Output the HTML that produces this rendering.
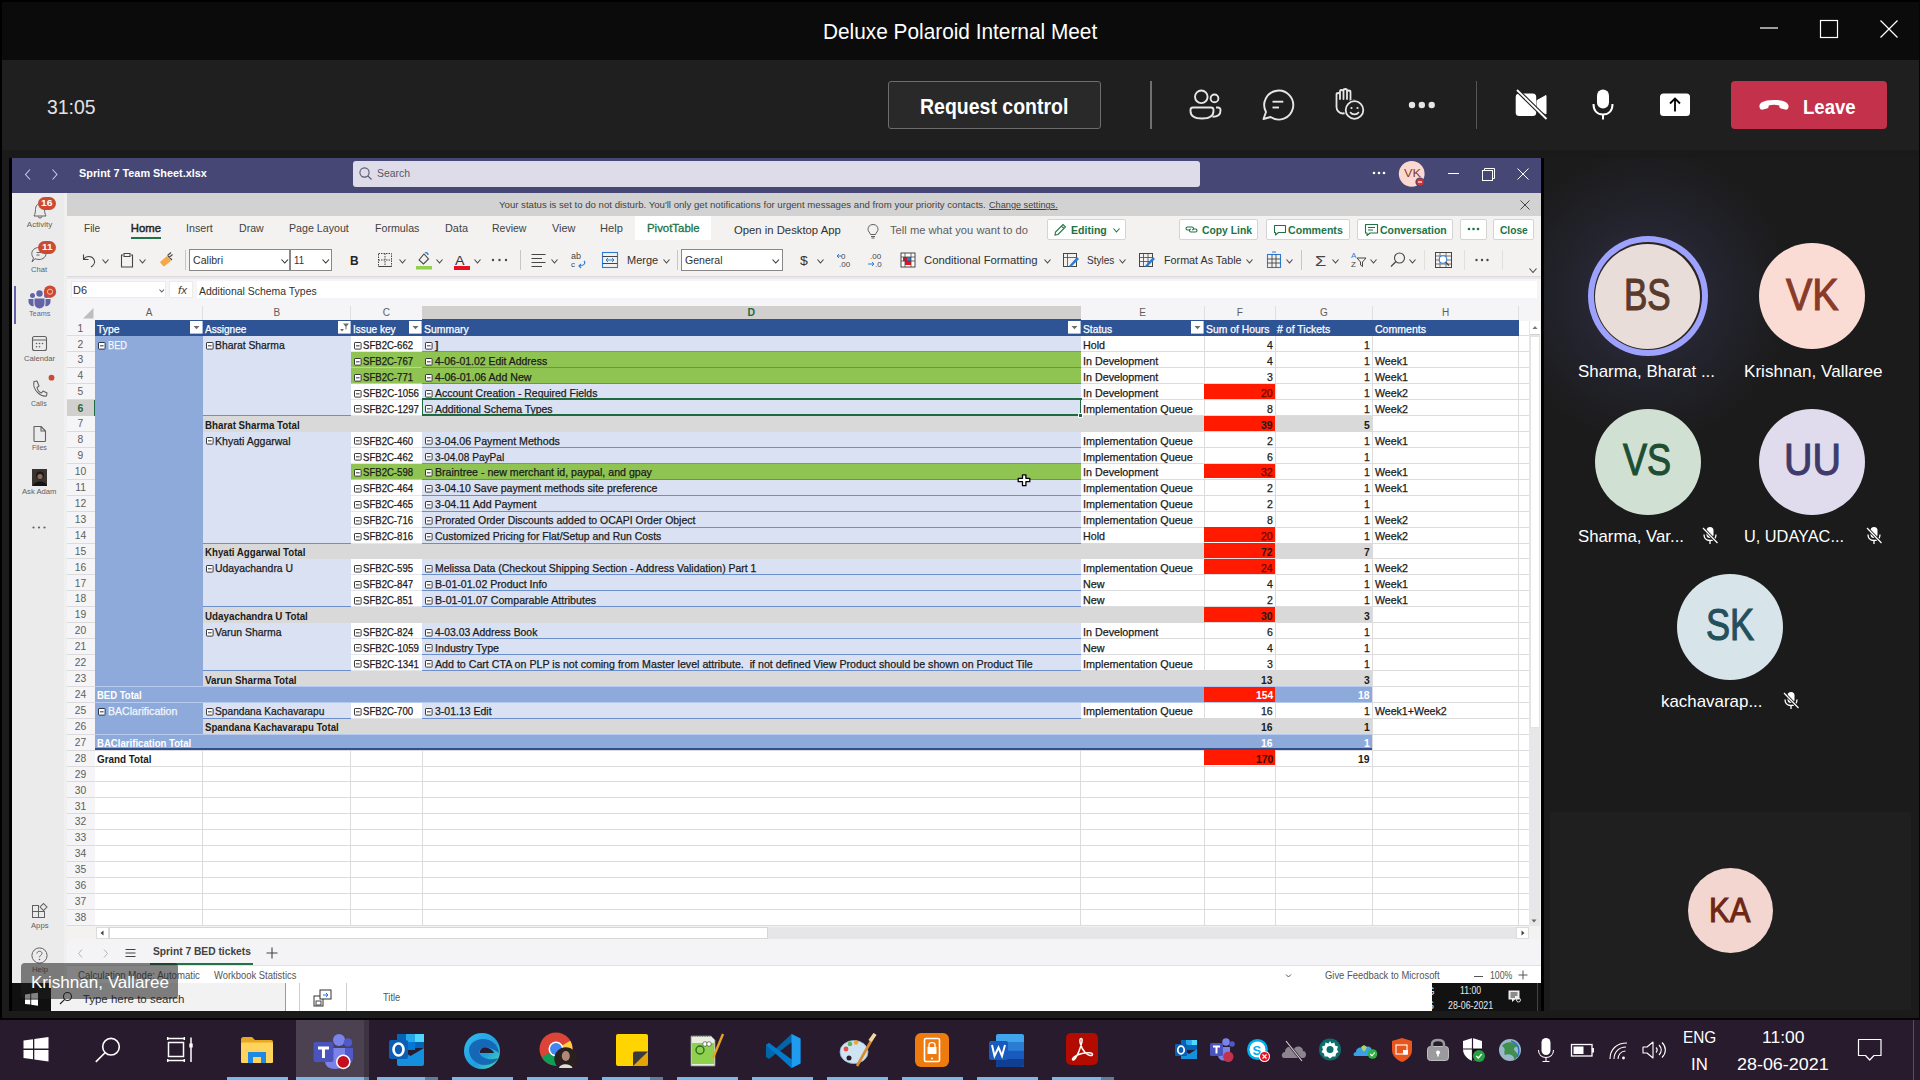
<!DOCTYPE html>
<html><head><meta charset="utf-8">
<style>
*{margin:0;padding:0;box-sizing:border-box}
html,body{width:1920px;height:1080px;overflow:hidden;background:#1b1b1b;font-family:"Liberation Sans",sans-serif}
.a{position:absolute}
.t{position:absolute;white-space:pre}
svg{overflow:visible}
.g{-webkit-text-stroke:0.25px currentColor}
</style></head><body>
<div class="a" style="left:0px;top:0px;width:1920px;height:60px;background:#0b0b0b"></div>
<div class="a" style="left:0px;top:0px;width:1920px;height:2px;background:#000"></div>
<div class="t " style="left:823.3px;top:20.9px;font-size:22px;line-height:22px;color:#ffffff;transform:scaleX(0.9461);transform-origin:0 0">Deluxe Polaroid Internal Meet</div>
<svg class="a" style="left:1740px;top:0px;" width="180" height="60" viewBox="0 0 180 60"><line x1="20" y1="28" x2="38" y2="28" stroke="#fff" stroke-width="1.2"/><rect x="80.5" y="20.5" width="17" height="17" fill="none" stroke="#fff" stroke-width="1.2"/><path d="M140.5 20.5 L157.5 37.5 M157.5 20.5 L140.5 37.5" stroke="#fff" stroke-width="1.2"/></svg>
<div class="a" style="left:0px;top:60px;width:1920px;height:90px;background:#1f1f1f"></div>
<div class="t " style="left:46.9px;top:96.0px;font-size:21px;line-height:21px;color:#e3e3e3;transform:scaleX(0.9229);transform-origin:0 0">31:05</div>
<div class="a" style="left:888px;top:81px;width:213px;height:48px;background:#292929;border:1.5px solid #6d6d6d;border-radius:3px"></div>
<div class="t " style="left:920.3px;top:95.6px;font-size:22px;line-height:22px;color:#ffffff;font-weight:bold;transform:scaleX(0.8862);transform-origin:0 0">Request control</div>
<div class="a" style="left:1150px;top:81px;width:1.6px;height:48px;background:#707070"></div>
<div class="a" style="left:1476px;top:81px;width:1.2px;height:48px;background:#555555"></div>
<svg class="a" style="left:1180px;top:80px;" width="60" height="50" viewBox="0 0 60 50"><g fill="none" stroke="#e6e6e6" stroke-width="1.9"><circle cx="21.3" cy="16.8" r="6.3"/><circle cx="34.5" cy="18.4" r="3.9"/><path d="M13 27.5 H31 a2.5 2.5 0 0 1 2.5 2.5 v1 c0 5 -4 7.5 -11.5 7.5 c-7.5 0 -11.5 -2.5 -11.5 -7.5 v-1 a2.5 2.5 0 0 1 2.5 -2.5z"/><path d="M36 27.5 h2 a2.5 2.5 0 0 1 2.5 2.5 v0.5 c0 4 -3 6.3 -8 6.3"/></g></svg>
<svg class="a" style="left:1250px;top:80px;" width="60" height="50" viewBox="0 0 60 50"><g fill="none" stroke="#e6e6e6" stroke-width="1.9"><path d="M13.5 39 L16 32 A14.5 14.5 0 1 1 20.5 37 Z" stroke-linejoin="round"/><line x1="22.5" y1="21.7" x2="33.3" y2="21.7"/><line x1="22.5" y1="27.5" x2="29" y2="27.5"/></g></svg>
<svg class="a" style="left:1320px;top:80px;" width="60" height="50" viewBox="0 0 60 50"><g fill="none" stroke="#e6e6e6" stroke-width="1.8" stroke-linecap="round" stroke-linejoin="round"><path d="M16.5 25 V14.5 C16.5 12.5 20 12.5 20 14.5 V19 V11.5 C20 9.5 23.5 9.5 23.5 11.5 V19 V10.5 C23.5 8.5 27 8.5 27 10.5 V19 V12 C27 10 30.5 10 30.5 12 V23 L32.5 21 C34.5 19.5 36.5 21.5 35 23.5 L29 31 C27 33 25 33.5 22.5 33.5 C19 33.5 16.5 30 16.5 27Z"/></g><circle cx="34.5" cy="30" r="10.5" fill="#1f1f1f"/><circle cx="34.5" cy="30" r="8.8" fill="none" stroke="#e6e6e6" stroke-width="1.8"/><path d="M30.5 32.5 C32 35 37 35 38.5 32.5" fill="none" stroke="#e6e6e6" stroke-width="1.6" stroke-linecap="round"/><circle cx="31.5" cy="28" r="1.1" fill="#e6e6e6"/><circle cx="37.5" cy="28" r="1.1" fill="#e6e6e6"/></svg>
<svg class="a" style="left:1400px;top:80px;" width="50" height="50" viewBox="0 0 50 50"><g fill="#e6e6e6"><circle cx="12" cy="25" r="3.2"/><circle cx="21.8" cy="25" r="3.2"/><circle cx="31.7" cy="25" r="3.2"/></g></svg>
<svg class="a" style="left:1505px;top:80px;" width="50" height="50" viewBox="0 0 50 50"><rect x="10.7" y="13.6" width="20.5" height="22.3" rx="3.5" fill="#fff"/><path d="M32 20.5 L41 15.5 V34 L32 29 Z" fill="#fff" stroke="#fff" stroke-width="1" stroke-linejoin="round"/><line x1="12" y1="10" x2="41.5" y2="39" stroke="#1f1f1f" stroke-width="4"/><line x1="12" y1="10" x2="41.5" y2="39" stroke="#fff" stroke-width="1.8"/></svg>
<svg class="a" style="left:1580px;top:80px;" width="50" height="50" viewBox="0 0 50 50"><rect x="17" y="9.5" width="12" height="19" rx="6" fill="#fff"/><path d="M13.5 24 C13.5 31 17.5 34.5 23 34.5 C28.5 34.5 32.5 31 32.5 24" fill="none" stroke="#fff" stroke-width="2"/><line x1="23" y1="34.5" x2="23" y2="39.5" stroke="#fff" stroke-width="2"/></svg>
<svg class="a" style="left:1650px;top:80px;" width="50" height="50" viewBox="0 0 50 50"><rect x="10" y="13.6" width="30" height="22.4" rx="3.5" fill="#fff"/><path d="M25 31.5 V19 M20 23.5 L25 18.5 L30 23.5" fill="none" stroke="#000" stroke-width="1.8"/></svg>
<div class="a" style="left:1731px;top:81px;width:156px;height:48px;background:#c4314b;border-radius:4px"></div>
<svg class="a" style="left:1755px;top:90px;" width="40" height="30" viewBox="0 0 40 30"><path d="M4.5 17 C4 13.5 7 10 19 10 C31 10 34 13.5 33.5 17 C33.3 19 32 20 30 19.5 L26 18.5 C24.5 18 24.3 17 24.3 15.5 C21 14.5 17 14.5 13.7 15.5 C13.7 17 13.5 18 12 18.5 L8 19.5 C6 20 4.7 19 4.5 17Z" fill="#fff"/></svg>
<div class="t " style="left:1803.0px;top:95.8px;font-size:21px;line-height:21px;color:#ffffff;font-weight:bold;transform:scaleX(0.8834);transform-origin:0 0">Leave</div>
<div class="a" style="left:0px;top:150px;width:1920px;height:8px;background:#1a1a1a"></div>
<div class="a" style="left:9px;top:158px;width:3px;height:853px;background:#000"></div>
<div class="a" style="left:12px;top:158px;width:1529px;height:853px;background:#f3f2f1"></div>
<div class="a" style="left:1541px;top:158px;width:3px;height:853px;background:#000"></div>
<div class="a" style="left:12px;top:158px;width:1529px;height:35px;background:#464775"></div>
<svg class="a" style="left:20px;top:165px;" width="40" height="20" viewBox="0 0 40 20"><path d="M10 4.5 L5.5 9.5 L10 14.5 M32.5 4.5 L37 9.5 L32.5 14.5" fill="none" stroke="#c8c9e4" stroke-width="1.1"/></svg>
<div class="t " style="left:79.0px;top:168.2px;font-size:11.5px;line-height:11.5px;color:#ffffff;font-weight:bold;transform:scaleX(0.9447);transform-origin:0 0">Sprint 7 Team Sheet.xlsx</div>
<div class="a" style="left:353px;top:161.1px;width:847px;height:25.7px;background:#dddce8;border-radius:3px"></div>
<svg class="a" style="left:358px;top:166px;" width="16" height="16" viewBox="0 0 16 16"><circle cx="6.5" cy="6.5" r="4.6" fill="none" stroke="#55576b" stroke-width="1.1"/><line x1="9.8" y1="9.8" x2="13.5" y2="13.5" stroke="#55576b" stroke-width="1.1"/></svg>
<div class="t " style="left:377.0px;top:168.2px;font-size:11px;line-height:11px;color:#55576b;transform:scaleX(0.9468);transform-origin:0 0">Search</div>
<svg class="a" style="left:1370px;top:165px;" width="20" height="16" viewBox="0 0 20 16"><g fill="#fff"><circle cx="4" cy="8" r="1.3"/><circle cx="9" cy="8" r="1.3"/><circle cx="14" cy="8" r="1.3"/></g></svg>
<svg class="a" style="left:1396px;top:158px;" width="34" height="34" viewBox="0 0 34 34"><circle cx="15.7" cy="15.8" r="12.9" fill="#fbd9d0"/><circle cx="24" cy="24" r="4.6" fill="#464775"/><circle cx="24" cy="24" r="3.5" fill="#d13438"/><rect x="22" y="23.4" width="4" height="1.2" fill="#fff"/></svg>
<div class="t " style="left:1403.5px;top:169.0px;font-size:10px;line-height:10px;color:#8a3c2a;transform:scaleX(1.2744);transform-origin:0 0">VK</div>
<svg class="a" style="left:1440px;top:160px;" width="100" height="30" viewBox="0 0 100 30"><line x1="8" y1="13.5" x2="19" y2="13.5" stroke="#fff" stroke-width="1"/><rect x="42.5" y="10.5" width="10" height="10" fill="none" stroke="#fff" stroke-width="1"/><path d="M44.5 10.5 V8.5 H54.5 V18.5 H52.5" fill="none" stroke="#fff" stroke-width="1"/><path d="M77.5 8.5 L88.5 19.5 M88.5 8.5 L77.5 19.5" stroke="#fff" stroke-width="1"/></svg>
<div class="a" style="left:12px;top:193px;width:54.5px;height:818px;background:#ebebeb"></div>
<div class="a" style="left:64px;top:193px;width:2.5px;height:818px;background:#f0f0f0"></div>
<svg class="a" style="left:30px;top:201px;" width="20" height="20" viewBox="0 0 20 20"><path d="M4 15 C5 13 5.5 11 5.5 8.5 C5.5 5 7.5 2.5 10 2.5 C12.5 2.5 14.5 5 14.5 8.5 C14.5 11 15 13 16 15 Z M8 15.5 C8 17.5 12 17.5 12 15.5" fill="none" stroke="#616161" stroke-width="1"/></svg>
<div class="a" style="left:38.3px;top:196.5px;width:17.4px;height:13px;background:#cc4a31;border-radius:6.5px"></div>
<div class="t " style="left:41.3px;top:199.0px;font-size:9px;line-height:9px;color:#fff;font-weight:bold;transform:scaleX(1.1488);transform-origin:0 0">16</div>
<div class="t " style="left:26.8px;top:221.2px;font-size:8px;line-height:8px;color:#616161">Activity</div>
<svg class="a" style="left:29px;top:245px;" width="20" height="20" viewBox="0 0 20 20"><path d="M3 17 L4.5 13 C3.3 11.5 2.8 10 2.8 8.5 C2.8 5 6 2.5 10 2.5 C14 2.5 17 5 17 8.5 C17 12 14 14.5 10 14.5 C8.5 14.5 7 14.2 6 13.7 Z" fill="none" stroke="#616161" stroke-width="1"/><line x1="7.5" y1="7.5" x2="12" y2="7.5" stroke="#616161"/><line x1="7.5" y1="10" x2="10.5" y2="10" stroke="#616161"/></svg>
<div class="a" style="left:38.3px;top:240.5px;width:17.4px;height:13px;background:#cc4a31;border-radius:6.5px"></div>
<div class="t " style="left:41.8px;top:243.0px;font-size:9px;line-height:9px;color:#fff;font-weight:bold;transform:scaleX(1.1036);transform-origin:0 0">11</div>
<div class="t " style="left:31.3px;top:265.9px;font-size:8px;line-height:8px;color:#616161;transform:scaleX(0.9468);transform-origin:0 0">Chat</div>
<div class="a" style="left:14px;top:285.5px;width:1.8px;height:38.3px;background:#6264a7"></div>
<svg class="a" style="left:27px;top:289px;" width="26" height="20" viewBox="0 0 26 20"><g fill="#6264a7"><circle cx="12.5" cy="4.5" r="3.2"/><circle cx="5.5" cy="6.5" r="2.5"/><circle cx="19.5" cy="6.5" r="2.5"/><path d="M7.5 9.5 H17.5 V14.5 A5 5 0 0 1 7.5 14.5Z"/><path d="M1.5 10 H6.5 V15 C6.5 16 6.7 16.5 7 17 A4.5 4.5 0 0 1 1.5 13Z"/><path d="M23.5 10 H18.5 V15 C18.5 16 18.3 16.5 18 17 A4.5 4.5 0 0 0 23.5 13Z"/></g></svg>
<svg class="a" style="left:43px;top:285px;" width="14" height="14" viewBox="0 0 14 14"><circle cx="7" cy="6.7" r="6.2" fill="#cc4a31"/><circle cx="7" cy="6.7" r="2.6" fill="none" stroke="#f7c6b5" stroke-width="1"/></svg>
<div class="t " style="left:28.8px;top:310.2px;font-size:8px;line-height:8px;color:#6264a7;transform:scaleX(0.9040);transform-origin:0 0">Teams</div>
<svg class="a" style="left:30px;top:334px;" width="20" height="20" viewBox="0 0 20 20"><rect x="2.5" y="2.5" width="14" height="14" rx="2" fill="none" stroke="#616161" stroke-width="1.1"/><line x1="2.5" y1="6" x2="16.5" y2="6" stroke="#616161"/><g fill="#616161"><circle cx="6.5" cy="9.5" r=".8"/><circle cx="9.5" cy="9.5" r=".8"/><circle cx="12.5" cy="9.5" r=".8"/><circle cx="6.5" cy="12.8" r=".8"/><circle cx="9.5" cy="12.8" r=".8"/></g></svg>
<div class="t " style="left:24.0px;top:354.9px;font-size:8px;line-height:8px;color:#616161;transform:scaleX(0.9549);transform-origin:0 0">Calendar</div>
<svg class="a" style="left:29px;top:379px;" width="20" height="20" viewBox="0 0 20 20"><path d="M5 2.5 L8 2 L10 7 L8 8.5 C8.5 11 10 13 12.5 14 L14 12 L18 14 L17.5 17 C12 18 3 11 5 2.5Z" fill="none" stroke="#616161" stroke-width="1.1" stroke-linejoin="round"/></svg>
<svg class="a" style="left:48px;top:374px;" width="8" height="8" viewBox="0 0 8 8"><circle cx="3.5" cy="3.7" r="2.9" fill="#cc4a31"/></svg>
<div class="t " style="left:31.4px;top:399.7px;font-size:8px;line-height:8px;color:#616161;transform:scaleX(0.8829);transform-origin:0 0">Calls</div>
<svg class="a" style="left:30px;top:424px;" width="20" height="20" viewBox="0 0 20 20"><path d="M4 2.5 H11 L15.5 7 V16.5 C15.5 17 15 17.5 14.5 17.5 H5 C4.5 17.5 4 17 4 16.5Z M11 2.5 V7 H15.5" fill="none" stroke="#616161" stroke-width="1.1" stroke-linejoin="round"/></svg>
<div class="t " style="left:32.0px;top:444.2px;font-size:8px;line-height:8px;color:#616161;transform:scaleX(0.8762);transform-origin:0 0">Files</div>
<div class="a" style="left:31.5px;top:469px;width:15.5px;height:16.5px;background:#3a3430"></div>
<svg class="a" style="left:31.5px;top:469px;" width="16" height="17" viewBox="0 0 16 17"><circle cx="8" cy="6.5" r="4" fill="#1c1a1a"/><path d="M1 17 C2 11 14 11 15 17Z" fill="#141414"/><circle cx="8" cy="7.5" r="2.6" fill="#8a6a58"/></svg>
<div class="t " style="left:22.2px;top:487.9px;font-size:8px;line-height:8px;color:#616161;transform:scaleX(0.9579);transform-origin:0 0">Ask Adam</div>
<svg class="a" style="left:30px;top:524px;" width="20" height="8" viewBox="0 0 20 8"><g fill="#616161"><circle cx="3.5" cy="3.5" r="1.1"/><circle cx="9" cy="3.5" r="1.1"/><circle cx="14.5" cy="3.5" r="1.1"/></g></svg>
<svg class="a" style="left:30px;top:903px;" width="20" height="20" viewBox="0 0 20 20"><g fill="none" stroke="#616161" stroke-width="1"><rect x="2.5" y="8.5" width="6" height="6"/><rect x="8.5" y="8.5" width="6" height="6"/><rect x="2.5" y="2.5" width="6" height="6"/><rect x="11" y="1.5" width="5" height="5" transform="rotate(45 13.5 4)"/></g></svg>
<div class="t " style="left:30.8px;top:922.2px;font-size:8px;line-height:8px;color:#616161;transform:scaleX(0.9597);transform-origin:0 0">Apps</div>
<svg class="a" style="left:29px;top:945px;" width="22" height="22" viewBox="0 0 22 22"><circle cx="10.5" cy="10.5" r="7.6" fill="none" stroke="#616161" stroke-width="1"/><path d="M8 8.5 C8 5.5 13 5.5 13 8.5 C13 10 10.5 10.5 10.5 12.3" fill="none" stroke="#616161"/><circle cx="10.5" cy="14.5" r=".8" fill="#616161"/></svg>
<div class="t " style="left:31.5px;top:966.2px;font-size:8px;line-height:8px;color:#616161;transform:scaleX(0.9725);transform-origin:0 0">Help</div>
<div class="a" style="left:66.5px;top:193px;width:1474.5px;height:22.5px;background:#d2d2d2"></div>
<div class="t " style="left:499.4px;top:200.1px;font-size:9.9px;line-height:9.9px;color:#424242;transform:scaleX(0.9737);transform-origin:0 0">Your status is set to do not disturb. You&#x27;ll only get notifications for urgent messages and from your priority contacts.</div>
<div class="t " style="left:989.2px;top:200.1px;font-size:9.9px;line-height:9.9px;color:#424242;transform:scaleX(0.9273);transform-origin:0 0;text-decoration:underline">Change settings.</div>
<svg class="a" style="left:1517px;top:197px;" width="16" height="16" viewBox="0 0 16 16"><path d="M3.5 3.5 L12.5 12.5 M12.5 3.5 L3.5 12.5" stroke="#444" stroke-width="1"/></svg>
<div class="a" style="left:66.5px;top:215.5px;width:1474.5px;height:61px;background:#f3f2f1"></div>
<div class="t " style="left:84.2px;top:222.5px;font-size:11.3px;line-height:11.3px;color:#424242;transform:scaleX(0.8897);transform-origin:0 0">File</div>
<div class="t " style="left:186.3px;top:222.5px;font-size:11.3px;line-height:11.3px;color:#424242;transform:scaleX(0.9483);transform-origin:0 0">Insert</div>
<div class="t " style="left:239.2px;top:222.5px;font-size:11.3px;line-height:11.3px;color:#424242;transform:scaleX(0.9367);transform-origin:0 0">Draw</div>
<div class="t " style="left:289.2px;top:222.5px;font-size:11.3px;line-height:11.3px;color:#424242;transform:scaleX(0.9424);transform-origin:0 0">Page Layout</div>
<div class="t " style="left:375.0px;top:222.5px;font-size:11.3px;line-height:11.3px;color:#424242;transform:scaleX(0.9428);transform-origin:0 0">Formulas</div>
<div class="t " style="left:444.6px;top:222.5px;font-size:11.3px;line-height:11.3px;color:#424242;transform:scaleX(0.9636);transform-origin:0 0">Data</div>
<div class="t " style="left:492.3px;top:222.5px;font-size:11.3px;line-height:11.3px;color:#424242;transform:scaleX(0.9285);transform-origin:0 0">Review</div>
<div class="t " style="left:551.7px;top:222.5px;font-size:11.3px;line-height:11.3px;color:#424242;transform:scaleX(0.9675);transform-origin:0 0">View</div>
<div class="t " style="left:599.9px;top:222.5px;font-size:11.3px;line-height:11.3px;color:#424242;transform:scaleX(0.9854);transform-origin:0 0">Help</div>
<div class="t " style="left:130.8px;top:222.5px;font-size:11.3px;line-height:11.3px;color:#252423;-webkit-text-stroke:0.45px #252423">Home</div>
<div class="a" style="left:131px;top:237.3px;width:30px;height:2.2px;background:#217346"></div>
<div class="a" style="left:635px;top:215.7px;width:76px;height:24.3px;background:#ffffff"></div>
<div class="t " style="left:646.8px;top:222.5px;font-size:11.3px;line-height:11.3px;color:#217346;transform:scaleX(1.0089);transform-origin:0 0;-webkit-text-stroke:0.3px #217346">PivotTable</div>
<div class="t " style="left:734.0px;top:225.4px;font-size:11.3px;line-height:11.3px;color:#323130">Open in Desktop App</div>
<svg class="a" style="left:866px;top:222px;" width="14" height="18" viewBox="0 0 14 18"><path d="M7 2.5 C3.5 2.5 2 5 2 7.3 C2 9.5 4 10.5 4.5 12.5 H9.5 C10 10.5 12 9.5 12 7.3 C12 5 10.5 2.5 7 2.5Z M5 14.5 H9 M5.5 16 H8.5" fill="none" stroke="#616161" stroke-width="1"/></svg>
<div class="t " style="left:890.3px;top:225.4px;font-size:11.3px;line-height:11.3px;color:#605e5c;transform:scaleX(0.9897);transform-origin:0 0">Tell me what you want to do</div>
<div class="a" style="left:1047px;top:219px;width:78.5px;height:21px;background:#ffffff;border:1px solid #d6d4d2;border-radius:2px"></div>
<div class="a" style="left:1178.7px;top:219px;width:79.3px;height:21px;background:#ffffff;border:1px solid #d6d4d2;border-radius:2px"></div>
<div class="a" style="left:1265.5px;top:219px;width:84.2px;height:21px;background:#ffffff;border:1px solid #d6d4d2;border-radius:2px"></div>
<div class="a" style="left:1357px;top:219px;width:95.6px;height:21px;background:#ffffff;border:1px solid #d6d4d2;border-radius:2px"></div>
<div class="a" style="left:1459.7px;top:219px;width:26.9px;height:21px;background:#ffffff;border:1px solid #d6d4d2;border-radius:2px"></div>
<div class="a" style="left:1493.4px;top:219px;width:40.6px;height:21px;background:#ffffff;border:1px solid #d6d4d2;border-radius:2px"></div>
<svg class="a" style="left:1052px;top:222px;" width="16" height="16" viewBox="0 0 16 16"><path d="M3 13 L3.5 10 L11 2.5 L13.5 5 L6 12.5 Z M9.5 4 L12 6.5" fill="none" stroke="#217346" stroke-width="1.1"/></svg>
<div class="t " style="left:1070.8px;top:224.8px;font-size:11.5px;line-height:11.5px;color:#217346;font-weight:bold;transform:scaleX(0.9188);transform-origin:0 0">Editing</div>
<svg class="a" style="left:1113px;top:228px;" width="7" height="5" viewBox="0 0 7 5"><path d="M0.5 0.5 L3.5 4 L6.5 0.5" fill="none" stroke="#217346" stroke-width="1.1"/></svg>
<svg class="a" style="left:1184px;top:223px;" width="16" height="14" viewBox="0 0 16 14"><path d="M6 7 H3.5 C1.5 7 1.5 4 3.5 4 H8 C10 4 10 7 8 7 M9 6 H11.5 C13.5 6 13.5 9 11.5 9 H7 C5 9 5 6 7 6" fill="none" stroke="#217346" stroke-width="1.1"/></svg>
<div class="t " style="left:1201.8px;top:224.8px;font-size:11.5px;line-height:11.5px;color:#217346;font-weight:bold;transform:scaleX(0.8995);transform-origin:0 0">Copy Link</div>
<svg class="a" style="left:1272px;top:222px;" width="16" height="16" viewBox="0 0 16 16"><path d="M2.5 3.5 H13.5 V10.5 H6.5 L3.5 13 V10.5 H2.5 Z" fill="none" stroke="#217346" stroke-width="1.1" stroke-linejoin="round"/></svg>
<div class="t " style="left:1288.3px;top:224.8px;font-size:11.5px;line-height:11.5px;color:#217346;font-weight:bold;transform:scaleX(0.9222);transform-origin:0 0">Comments</div>
<svg class="a" style="left:1363px;top:222px;" width="16" height="16" viewBox="0 0 16 16"><path d="M2.5 2.5 H14.5 V11 H7 L4 13.5 V11 H2.5 Z M5 5.5 H12 M5 8 H10" fill="none" stroke="#217346" stroke-width="1.1" stroke-linejoin="round"/></svg>
<div class="t " style="left:1379.8px;top:224.8px;font-size:11.5px;line-height:11.5px;color:#217346;font-weight:bold;transform:scaleX(0.9076);transform-origin:0 0">Conversation</div>
<svg class="a" style="left:1466px;top:226px;" width="16" height="6" viewBox="0 0 16 6"><g fill="#217346"><circle cx="3" cy="3" r="1.3"/><circle cx="7.5" cy="3" r="1.3"/><circle cx="12" cy="3" r="1.3"/></g></svg>
<div class="t " style="left:1500.0px;top:224.8px;font-size:11.5px;line-height:11.5px;color:#217346;font-weight:bold;transform:scaleX(0.8877);transform-origin:0 0">Close</div>
<svg class="a" style="left:80px;top:252px;" width="18" height="16" viewBox="0 0 18 16"><path d="M3.5 2.5 V7.5 H8.5 M3.8 7.2 C6 3.5 12 3.5 14 7.5 C15.5 10.5 13.5 13.5 11 15" fill="none" stroke="#484644" stroke-width="1.1"/></svg>
<svg class="a" style="left:101.7px;top:258.5px;" width="7" height="5" viewBox="0 0 7 5"><path d="M0.5 0.5 L3.5 4 L6.5 0.5" fill="none" stroke="#444" stroke-width="1.1"/></svg>
<svg class="a" style="left:119px;top:251px;" width="16" height="18" viewBox="0 0 16 18"><path d="M4 4 H2.5 V16 H13.5 V4 H12 M5 2.5 H11 V5.5 H5Z" fill="none" stroke="#484644" stroke-width="1.1"/></svg>
<svg class="a" style="left:139.4px;top:258.5px;" width="7" height="5" viewBox="0 0 7 5"><path d="M0.5 0.5 L3.5 4 L6.5 0.5" fill="none" stroke="#444" stroke-width="1.1"/></svg>
<svg class="a" style="left:158px;top:251px;" width="16" height="18" viewBox="0 0 16 18"><path d="M2 11 L9 5 L13 10 L6 15.5 C4 14 3 12.5 2 11Z" fill="#f2a94d"/><path d="M9.5 4.5 L13 1.5 M11 6.5 L14.5 3.5 M10 5 L14 9" stroke="#484644" stroke-width="1.1"/></svg>
<div class="a" style="left:185px;top:250px;width:1px;height:20px;background:#c8c6c4"></div>
<div class="a" style="left:189.4px;top:249px;width:101.1px;height:22px;background:#fff;border:1px solid #8a8886"></div>
<div class="t " style="left:193.3px;top:255.4px;font-size:11.3px;line-height:11.3px;color:#323130;transform:scaleX(0.9368);transform-origin:0 0">Calibri</div>
<svg class="a" style="left:280.5px;top:258.5px;" width="7.5" height="5" viewBox="0 0 7.5 5"><path d="M0.5 0.5 L3.75 4 L7.0 0.5" fill="none" stroke="#323130" stroke-width="1.1"/></svg>
<div class="a" style="left:290px;top:249px;width:41.6px;height:22px;background:#fff;border:1px solid #8a8886"></div>
<div class="t " style="left:294.4px;top:255.4px;font-size:11.3px;line-height:11.3px;color:#323130;transform:scaleX(0.8525);transform-origin:0 0">11</div>
<svg class="a" style="left:321.7px;top:258.5px;" width="7.5" height="5" viewBox="0 0 7.5 5"><path d="M0.5 0.5 L3.75 4 L7.0 0.5" fill="none" stroke="#323130" stroke-width="1.1"/></svg>
<div class="t " style="left:349.6px;top:254.1px;font-size:13.5px;line-height:13.5px;color:#252423;font-weight:bold;transform:scaleX(0.8821);transform-origin:0 0">B</div>
<svg class="a" style="left:377px;top:252px;" width="16" height="16" viewBox="0 0 16 16"><rect x="1.5" y="1.5" width="13" height="13" fill="none" stroke="#484644" stroke-width="1" stroke-dasharray="1.5 1"/><path d="M8 1.5 V14.5 M1.5 8 H14.5" stroke="#484644" stroke-width="1" stroke-dasharray="1.5 1"/><line x1="1.5" y1="14.5" x2="14.5" y2="14.5" stroke="#484644"/></svg>
<svg class="a" style="left:398.5px;top:258.5px;" width="7" height="5" viewBox="0 0 7 5"><path d="M0.5 0.5 L3.5 4 L6.5 0.5" fill="none" stroke="#444" stroke-width="1.1"/></svg>
<svg class="a" style="left:415px;top:250px;" width="18" height="20" viewBox="0 0 18 20"><path d="M4 10 L9 4 L13.5 9 L8.5 14 Z" fill="none" stroke="#484644" stroke-width="1.1"/><path d="M10 3 C11 2 13 3 13 5" fill="none" stroke="#2b7cd3" stroke-width="1.3"/><rect x="1" y="16" width="16" height="3.5" fill="#92d050"/></svg>
<svg class="a" style="left:436px;top:258.5px;" width="7" height="5" viewBox="0 0 7 5"><path d="M0.5 0.5 L3.5 4 L6.5 0.5" fill="none" stroke="#444" stroke-width="1.1"/></svg>
<div class="t " style="left:455.0px;top:253.6px;font-size:13.5px;line-height:13.5px;color:#323130;transform:scaleX(1.0550);transform-origin:0 0">A</div>
<div class="a" style="left:453.8px;top:266px;width:16.2px;height:3.5px;background:#e81123"></div>
<svg class="a" style="left:474px;top:258.5px;" width="7" height="5" viewBox="0 0 7 5"><path d="M0.5 0.5 L3.5 4 L6.5 0.5" fill="none" stroke="#444" stroke-width="1.1"/></svg>
<svg class="a" style="left:490px;top:257px;" width="20" height="6" viewBox="0 0 20 6"><g fill="#484644"><circle cx="3" cy="3" r="1.2"/><circle cx="9.5" cy="3" r="1.2"/><circle cx="16" cy="3" r="1.2"/></g></svg>
<div class="a" style="left:519.6px;top:250px;width:1px;height:20px;background:#c8c6c4"></div>
<svg class="a" style="left:530px;top:252px;" width="18" height="16" viewBox="0 0 18 16"><path d="M1.5 2.5 H15.5 M1.5 6.5 H12 M1.5 10.5 H15.5 M1.5 14.5 H12" stroke="#484644" stroke-width="1"/></svg>
<svg class="a" style="left:551px;top:258.5px;" width="7" height="5" viewBox="0 0 7 5"><path d="M0.5 0.5 L3.5 4 L6.5 0.5" fill="none" stroke="#444" stroke-width="1.1"/></svg>
<svg class="a" style="left:570px;top:250px;" width="18" height="20" viewBox="0 0 18 20"><text x="1" y="9" font-size="9" font-family="Liberation Sans" fill="#484644">ab</text><text x="1" y="17" font-size="8" font-family="Liberation Sans" fill="#484644">c</text><path d="M14 11 C16 13 14 16 9 16 M11 14 L9 16 L11 18" fill="none" stroke="#2b7cd3" stroke-width="1.1"/></svg>
<svg class="a" style="left:601px;top:251px;" width="18" height="18" viewBox="0 0 18 18"><rect x="1.5" y="1.5" width="15" height="15" fill="none" stroke="#2b7cd3" stroke-width="1.1"/><path d="M1.5 5.5 H16.5 M1.5 12.5 H16.5" stroke="#484644" stroke-width="1"/><path d="M5 9 H13 M7 7 L5 9 L7 11 M11 7 L13 9 L11 11" fill="none" stroke="#2b7cd3" stroke-width="1"/></svg>
<div class="t " style="left:626.5px;top:255.4px;font-size:11.3px;line-height:11.3px;color:#323130;transform:scaleX(0.9741);transform-origin:0 0">Merge</div>
<svg class="a" style="left:663px;top:258.5px;" width="7" height="5" viewBox="0 0 7 5"><path d="M0.5 0.5 L3.5 4 L6.5 0.5" fill="none" stroke="#444" stroke-width="1.1"/></svg>
<div class="a" style="left:677.2px;top:250px;width:1px;height:20px;background:#c8c6c4"></div>
<div class="a" style="left:681.4px;top:249px;width:101.3px;height:22px;background:#fff;border:1px solid #8a8886"></div>
<div class="t " style="left:685.3px;top:255.4px;font-size:11.3px;line-height:11.3px;color:#323130;transform:scaleX(0.9328);transform-origin:0 0">General</div>
<svg class="a" style="left:771.8px;top:258.5px;" width="7.5" height="5" viewBox="0 0 7.5 5"><path d="M0.5 0.5 L3.75 4 L7.0 0.5" fill="none" stroke="#323130" stroke-width="1.1"/></svg>
<div class="t " style="left:800.4px;top:254.0px;font-size:13px;line-height:13px;color:#323130;transform:scaleX(1.0788);transform-origin:0 0">$</div>
<svg class="a" style="left:816.6px;top:258.5px;" width="7" height="5" viewBox="0 0 7 5"><path d="M0.5 0.5 L3.5 4 L6.5 0.5" fill="none" stroke="#444" stroke-width="1.1"/></svg>
<svg class="a" style="left:836px;top:250px;" width="18" height="20" viewBox="0 0 18 20"><text x="5" y="9" font-size="8" font-family="Liberation Sans" fill="#484644">0</text><text x="3" y="17" font-size="8" font-family="Liberation Sans" fill="#484644">.00</text><path d="M1 6 H6 M3 4 L1 6 L3 8" fill="none" stroke="#2b7cd3" stroke-width="1"/></svg>
<svg class="a" style="left:867px;top:250px;" width="18" height="20" viewBox="0 0 18 20"><text x="3" y="9" font-size="8" font-family="Liberation Sans" fill="#484644">.00</text><text x="8" y="17" font-size="8" font-family="Liberation Sans" fill="#484644">.0</text><path d="M1 14 H7 M5 12 L7 14 L5 16" fill="none" stroke="#2b7cd3" stroke-width="1"/></svg>
<svg class="a" style="left:900px;top:252px;" width="16" height="16" viewBox="0 0 16 16"><rect x="1" y="1" width="14" height="14" fill="#fff" stroke="#484644" stroke-width="1"/><rect x="3" y="5" width="4" height="4" fill="#e81123"/><rect x="7" y="5" width="4" height="4" fill="#2b7cd3"/><rect x="5" y="9" width="6" height="4" fill="#e81123"/><path d="M1 5 H15 M1 9 H15 M5 1 V15 M11 1 V15" stroke="#484644" stroke-width=".8"/></svg>
<div class="t " style="left:924.0px;top:255.4px;font-size:11.3px;line-height:11.3px;color:#323130">Conditional Formatting</div>
<svg class="a" style="left:1044px;top:258.5px;" width="7" height="5" viewBox="0 0 7 5"><path d="M0.5 0.5 L3.5 4 L6.5 0.5" fill="none" stroke="#444" stroke-width="1.1"/></svg>
<svg class="a" style="left:1062px;top:251px;" width="18" height="18" viewBox="0 0 18 18"><rect x="1.5" y="2.5" width="13" height="13" fill="none" stroke="#484644" stroke-width="1"/><path d="M1.5 6.5 H14.5 M5.5 2.5 V15.5" stroke="#484644" stroke-width=".8"/><path d="M7 15 L15 6 L17 8 L9 16 Z" fill="#2b7cd3"/></svg>
<div class="t " style="left:1086.8px;top:255.4px;font-size:11.3px;line-height:11.3px;color:#323130;transform:scaleX(0.8904);transform-origin:0 0">Styles</div>
<svg class="a" style="left:1119px;top:258.5px;" width="7" height="5" viewBox="0 0 7 5"><path d="M0.5 0.5 L3.5 4 L6.5 0.5" fill="none" stroke="#444" stroke-width="1.1"/></svg>
<svg class="a" style="left:1138px;top:251px;" width="18" height="18" viewBox="0 0 18 18"><rect x="1.5" y="2.5" width="13" height="13" fill="none" stroke="#484644" stroke-width="1"/><path d="M1.5 6.5 H14.5 M1.5 10.5 H14.5 M5.5 2.5 V15.5 M10 2.5 V15.5" stroke="#484644" stroke-width=".8"/><path d="M7 15 L15 6 L17 8 L9 16 Z" fill="#2b7cd3"/></svg>
<div class="t " style="left:1163.7px;top:255.4px;font-size:11.3px;line-height:11.3px;color:#323130;transform:scaleX(0.9528);transform-origin:0 0">Format As Table</div>
<svg class="a" style="left:1246px;top:258.5px;" width="7" height="5" viewBox="0 0 7 5"><path d="M0.5 0.5 L3.5 4 L6.5 0.5" fill="none" stroke="#444" stroke-width="1.1"/></svg>
<svg class="a" style="left:1266px;top:251px;" width="16" height="18" viewBox="0 0 16 18"><rect x="1.5" y="3.5" width="13" height="13" fill="none" stroke="#2b7cd3" stroke-width="1.1"/><path d="M1.5 8 H14.5 M1.5 12 H14.5 M6 3.5 V16.5 M10 3.5 V16.5" stroke="#484644" stroke-width=".9"/><path d="M6 1 H10" stroke="#2b7cd3"/></svg>
<svg class="a" style="left:1286px;top:258.5px;" width="7" height="5" viewBox="0 0 7 5"><path d="M0.5 0.5 L3.5 4 L6.5 0.5" fill="none" stroke="#444" stroke-width="1.1"/></svg>
<div class="a" style="left:1300.5px;top:250px;width:1px;height:20px;background:#c8c6c4"></div>
<div class="t " style="left:1315.0px;top:254.1px;font-size:14px;line-height:14px;color:#484644;transform:scaleX(1.3057);transform-origin:0 0">Σ</div>
<svg class="a" style="left:1332px;top:258.5px;" width="7" height="5" viewBox="0 0 7 5"><path d="M0.5 0.5 L3.5 4 L6.5 0.5" fill="none" stroke="#444" stroke-width="1.1"/></svg>
<svg class="a" style="left:1350px;top:250px;" width="18" height="20" viewBox="0 0 18 20"><text x="1" y="8" font-size="8" font-family="Liberation Sans" fill="#2b7cd3">A</text><text x="1" y="17" font-size="8" font-family="Liberation Sans" fill="#484644">Z</text><path d="M7 8 H16 L12.5 12 V16.5 L10.5 15 V12 Z" fill="none" stroke="#484644" stroke-width="1"/></svg>
<svg class="a" style="left:1370px;top:258.5px;" width="7" height="5" viewBox="0 0 7 5"><path d="M0.5 0.5 L3.5 4 L6.5 0.5" fill="none" stroke="#444" stroke-width="1.1"/></svg>
<svg class="a" style="left:1389px;top:251px;" width="18" height="18" viewBox="0 0 18 18"><circle cx="10.5" cy="7" r="5" fill="none" stroke="#484644" stroke-width="1.1"/><line x1="7" y1="10.5" x2="2" y2="15.5" stroke="#484644" stroke-width="1.2"/></svg>
<svg class="a" style="left:1409px;top:258.5px;" width="7" height="5" viewBox="0 0 7 5"><path d="M0.5 0.5 L3.5 4 L6.5 0.5" fill="none" stroke="#444" stroke-width="1.1"/></svg>
<div class="a" style="left:1424px;top:250px;width:1px;height:20px;background:#e1dfdd"></div>
<svg class="a" style="left:1434px;top:251px;" width="19" height="18" viewBox="0 0 19 18"><rect x="1.5" y="1.5" width="16" height="15" fill="none" stroke="#484644" stroke-width="1"/><path d="M1.5 5 H17.5 M1.5 9 H17.5 M1.5 13 H17.5 M6 1.5 V16.5 M12 1.5 V16.5" stroke="#484644" stroke-width=".7"/><circle cx="9" cy="8.5" r="3.8" fill="#fff" stroke="#2b7cd3" stroke-width="1.1"/><line x1="11.5" y1="11" x2="15" y2="14.5" stroke="#484644" stroke-width="1.2"/></svg>
<div class="a" style="left:1463.7px;top:250px;width:1px;height:20px;background:#e1dfdd"></div>
<svg class="a" style="left:1474px;top:257px;" width="18" height="6" viewBox="0 0 18 6"><g fill="#484644"><circle cx="2.5" cy="3" r="1.2"/><circle cx="8" cy="3" r="1.2"/><circle cx="13.5" cy="3" r="1.2"/></g></svg>
<div class="a" style="left:1501.8px;top:250px;width:1px;height:20px;background:#e1dfdd"></div>
<svg class="a" style="left:1528.5px;top:268px;" width="8" height="5.5" viewBox="0 0 8 5.5"><path d="M0.5 0.5 L4.0 4.5 L7.5 0.5" fill="none" stroke="#484644" stroke-width="1.1"/></svg>
<div class="a" style="left:66.5px;top:276px;width:1474.5px;height:1px;background:#dcdadb"></div>
<div class="a" style="left:66.5px;top:277px;width:1474.5px;height:1.5px;background:#e9e8ea"></div>
<div class="a" style="left:66.5px;top:278.5px;width:1474.5px;height:22px;background:#f5f4f6"></div>
<div class="a" style="left:70.6px;top:280.8px;width:95.4px;height:17.6px;background:#fff;border:1px solid #edebe9"></div>
<div class="t " style="left:72.8px;top:285.2px;font-size:10.8px;line-height:10.8px;color:#323130;transform:scaleX(1.0141);transform-origin:0 0">D6</div>
<svg class="a" style="left:158.5px;top:288.5px;" width="5.5" height="4" viewBox="0 0 5.5 4"><path d="M0.5 0.5 L2.75 3 L5.0 0.5" fill="none" stroke="#605e5c" stroke-width="1.1"/></svg>
<div class="a" style="left:169px;top:280.8px;width:24px;height:17.6px;background:#fff;border:1px solid #edebe9"></div>
<div class="t " style="left:177.5px;top:284.8px;font-size:11.5px;line-height:11.5px;color:#484644;transform:scaleX(1.0061);transform-origin:0 0;font-style:italic;font-family:"Liberation Serif",serif">fx</div>
<div class="a" style="left:197px;top:280.8px;width:1340px;height:17.4px;background:#fff"></div>
<div class="t " style="left:198.8px;top:285.5px;font-size:10.8px;line-height:10.8px;color:#323130;transform:scaleX(0.9673);transform-origin:0 0">Additional Schema Types</div>
<div class="a" style="left:66.5px;top:300.5px;width:1462.8px;height:625.2px;background:#ffffff"></div>
<div class="a" style="left:66.5px;top:300.5px;width:1462.8px;height:20.1px;background:#f5f4f6"></div>
<div class="a" style="left:95.4px;top:305.5px;width:1423.5px;height:15.1px;background:#f5f4f6"></div>
<div class="a" style="left:66.5px;top:320.0px;width:28.9px;height:605.5px;background:#f5f4f6"></div>
<svg class="a" style="left:82px;top:307px;" width="13" height="13" viewBox="0 0 13 13"><path d="M11.5 1 V11.5 H1 Z" fill="#bdbdbd"/></svg>
<div class="a" style="left:202.1px;top:305.5px;width:1px;height:15.1px;background:#e1dfdd"></div>
<div class="a" style="left:350.3px;top:305.5px;width:1px;height:15.1px;background:#e1dfdd"></div>
<div class="a" style="left:421.5px;top:305.5px;width:1px;height:15.1px;background:#e1dfdd"></div>
<div class="a" style="left:1080.3px;top:305.5px;width:1px;height:15.1px;background:#e1dfdd"></div>
<div class="a" style="left:1203.7px;top:305.5px;width:1px;height:15.1px;background:#e1dfdd"></div>
<div class="a" style="left:1274.9px;top:305.5px;width:1px;height:15.1px;background:#e1dfdd"></div>
<div class="a" style="left:1372.0px;top:305.5px;width:1px;height:15.1px;background:#e1dfdd"></div>
<div class="a" style="left:1518.4px;top:305.5px;width:1px;height:15.1px;background:#e1dfdd"></div>
<div class="a" style="left:1528.8px;top:305.5px;width:1px;height:15.1px;background:#e1dfdd"></div>
<div class="a" style="left:422.0px;top:305.5px;width:658.8px;height:14.2px;background:#d2d0ce"></div>
<div class="a" style="left:422.0px;top:319.2px;width:658.8px;height:1.4px;background:#1e6b41"></div>
<div class="t " style="left:145.7px;top:307.5px;font-size:10px;line-height:10px;color:#605e5c">A</div>
<div class="t " style="left:273.4px;top:307.5px;font-size:10px;line-height:10px;color:#605e5c">B</div>
<div class="t " style="left:382.8px;top:307.5px;font-size:10px;line-height:10px;color:#605e5c">C</div>
<div class="t " style="left:747.6px;top:307.1px;font-size:10.5px;line-height:10.5px;color:#1e6b41;font-weight:bold">D</div>
<div class="t " style="left:1139.2px;top:307.5px;font-size:10px;line-height:10px;color:#605e5c">E</div>
<div class="t " style="left:1236.7px;top:307.5px;font-size:10px;line-height:10px;color:#605e5c">F</div>
<div class="t " style="left:1320.1px;top:307.5px;font-size:10px;line-height:10px;color:#605e5c">G</div>
<div class="t " style="left:1442.1px;top:307.5px;font-size:10px;line-height:10px;color:#605e5c">H</div>
<div class="a" style="left:66.5px;top:335.43px;width:1462.8px;height:1px;background:#dcdcdf"></div>
<div class="a" style="left:66.5px;top:351.36px;width:1462.8px;height:1px;background:#dcdcdf"></div>
<div class="a" style="left:66.5px;top:367.29px;width:1462.8px;height:1px;background:#dcdcdf"></div>
<div class="a" style="left:66.5px;top:383.22px;width:1462.8px;height:1px;background:#dcdcdf"></div>
<div class="a" style="left:66.5px;top:399.15px;width:1462.8px;height:1px;background:#dcdcdf"></div>
<div class="a" style="left:66.5px;top:415.08px;width:1462.8px;height:1px;background:#dcdcdf"></div>
<div class="a" style="left:66.5px;top:431.01px;width:1462.8px;height:1px;background:#dcdcdf"></div>
<div class="a" style="left:66.5px;top:446.94px;width:1462.8px;height:1px;background:#dcdcdf"></div>
<div class="a" style="left:66.5px;top:462.87px;width:1462.8px;height:1px;background:#dcdcdf"></div>
<div class="a" style="left:66.5px;top:478.8px;width:1462.8px;height:1px;background:#dcdcdf"></div>
<div class="a" style="left:66.5px;top:494.73px;width:1462.8px;height:1px;background:#dcdcdf"></div>
<div class="a" style="left:66.5px;top:510.66px;width:1462.8px;height:1px;background:#dcdcdf"></div>
<div class="a" style="left:66.5px;top:526.59px;width:1462.8px;height:1px;background:#dcdcdf"></div>
<div class="a" style="left:66.5px;top:542.52px;width:1462.8px;height:1px;background:#dcdcdf"></div>
<div class="a" style="left:66.5px;top:558.45px;width:1462.8px;height:1px;background:#dcdcdf"></div>
<div class="a" style="left:66.5px;top:574.38px;width:1462.8px;height:1px;background:#dcdcdf"></div>
<div class="a" style="left:66.5px;top:590.31px;width:1462.8px;height:1px;background:#dcdcdf"></div>
<div class="a" style="left:66.5px;top:606.24px;width:1462.8px;height:1px;background:#dcdcdf"></div>
<div class="a" style="left:66.5px;top:622.17px;width:1462.8px;height:1px;background:#dcdcdf"></div>
<div class="a" style="left:66.5px;top:638.1px;width:1462.8px;height:1px;background:#dcdcdf"></div>
<div class="a" style="left:66.5px;top:654.03px;width:1462.8px;height:1px;background:#dcdcdf"></div>
<div class="a" style="left:66.5px;top:669.96px;width:1462.8px;height:1px;background:#dcdcdf"></div>
<div class="a" style="left:66.5px;top:685.89px;width:1462.8px;height:1px;background:#dcdcdf"></div>
<div class="a" style="left:66.5px;top:701.82px;width:1462.8px;height:1px;background:#dcdcdf"></div>
<div class="a" style="left:66.5px;top:717.75px;width:1462.8px;height:1px;background:#dcdcdf"></div>
<div class="a" style="left:66.5px;top:733.68px;width:1462.8px;height:1px;background:#dcdcdf"></div>
<div class="a" style="left:66.5px;top:749.61px;width:1462.8px;height:1px;background:#dcdcdf"></div>
<div class="a" style="left:66.5px;top:765.54px;width:1462.8px;height:1px;background:#dcdcdf"></div>
<div class="a" style="left:66.5px;top:781.47px;width:1462.8px;height:1px;background:#dcdcdf"></div>
<div class="a" style="left:66.5px;top:797.4px;width:1462.8px;height:1px;background:#dcdcdf"></div>
<div class="a" style="left:66.5px;top:813.33px;width:1462.8px;height:1px;background:#dcdcdf"></div>
<div class="a" style="left:66.5px;top:829.26px;width:1462.8px;height:1px;background:#dcdcdf"></div>
<div class="a" style="left:66.5px;top:845.19px;width:1462.8px;height:1px;background:#dcdcdf"></div>
<div class="a" style="left:66.5px;top:861.12px;width:1462.8px;height:1px;background:#dcdcdf"></div>
<div class="a" style="left:66.5px;top:877.05px;width:1462.8px;height:1px;background:#dcdcdf"></div>
<div class="a" style="left:66.5px;top:892.98px;width:1462.8px;height:1px;background:#dcdcdf"></div>
<div class="a" style="left:66.5px;top:908.91px;width:1462.8px;height:1px;background:#dcdcdf"></div>
<div class="a" style="left:66.5px;top:924.84px;width:1462.8px;height:1px;background:#dcdcdf"></div>
<div class="a" style="left:202.1px;top:320.6px;width:1px;height:605px;background:#dcdcdf"></div>
<div class="a" style="left:350.3px;top:320.6px;width:1px;height:605px;background:#dcdcdf"></div>
<div class="a" style="left:421.5px;top:320.6px;width:1px;height:605px;background:#dcdcdf"></div>
<div class="a" style="left:1080.3px;top:320.6px;width:1px;height:605px;background:#dcdcdf"></div>
<div class="a" style="left:1203.7px;top:320.6px;width:1px;height:605px;background:#dcdcdf"></div>
<div class="a" style="left:1274.9px;top:320.6px;width:1px;height:605px;background:#dcdcdf"></div>
<div class="a" style="left:1372.0px;top:320.6px;width:1px;height:605px;background:#dcdcdf"></div>
<div class="a" style="left:1518.4px;top:320.6px;width:1px;height:605px;background:#dcdcdf"></div>
<div class="a" style="left:1528.8px;top:320.6px;width:1px;height:605px;background:#dcdcdf"></div>
<div class="t " style="left:77.6px;top:323.6px;font-size:10.3px;line-height:10.3px;color:#605e5c">1</div>
<div class="t " style="left:77.6px;top:339.5px;font-size:10.3px;line-height:10.3px;color:#605e5c">2</div>
<div class="t " style="left:77.6px;top:355.4px;font-size:10.3px;line-height:10.3px;color:#605e5c">3</div>
<div class="t " style="left:77.6px;top:371.4px;font-size:10.3px;line-height:10.3px;color:#605e5c">4</div>
<div class="t " style="left:77.6px;top:387.3px;font-size:10.3px;line-height:10.3px;color:#605e5c">5</div>
<div class="a" style="left:66.5px;top:399.65px;width:28.9px;height:15.93px;background:#d2d0ce"></div>
<div class="a" style="left:93.8px;top:399.65px;width:1.6px;height:15.93px;background:#1e6b41"></div>
<div class="t " style="left:77.6px;top:403.1px;font-size:10.5px;line-height:10.5px;color:#1e6b41;font-weight:bold">6</div>
<div class="t " style="left:77.6px;top:419.2px;font-size:10.3px;line-height:10.3px;color:#605e5c">7</div>
<div class="t " style="left:77.6px;top:435.1px;font-size:10.3px;line-height:10.3px;color:#605e5c">8</div>
<div class="t " style="left:77.6px;top:451.0px;font-size:10.3px;line-height:10.3px;color:#605e5c">9</div>
<div class="t " style="left:74.8px;top:466.9px;font-size:10.3px;line-height:10.3px;color:#605e5c">10</div>
<div class="t " style="left:75.2px;top:482.9px;font-size:10.3px;line-height:10.3px;color:#605e5c">11</div>
<div class="t " style="left:74.8px;top:498.8px;font-size:10.3px;line-height:10.3px;color:#605e5c">12</div>
<div class="t " style="left:74.8px;top:514.7px;font-size:10.3px;line-height:10.3px;color:#605e5c">13</div>
<div class="t " style="left:74.8px;top:530.7px;font-size:10.3px;line-height:10.3px;color:#605e5c">14</div>
<div class="t " style="left:74.8px;top:546.6px;font-size:10.3px;line-height:10.3px;color:#605e5c">15</div>
<div class="t " style="left:74.8px;top:562.5px;font-size:10.3px;line-height:10.3px;color:#605e5c">16</div>
<div class="t " style="left:74.8px;top:578.5px;font-size:10.3px;line-height:10.3px;color:#605e5c">17</div>
<div class="t " style="left:74.8px;top:594.4px;font-size:10.3px;line-height:10.3px;color:#605e5c">18</div>
<div class="t " style="left:74.8px;top:610.3px;font-size:10.3px;line-height:10.3px;color:#605e5c">19</div>
<div class="t " style="left:74.8px;top:626.2px;font-size:10.3px;line-height:10.3px;color:#605e5c">20</div>
<div class="t " style="left:74.8px;top:642.2px;font-size:10.3px;line-height:10.3px;color:#605e5c">21</div>
<div class="t " style="left:74.8px;top:658.1px;font-size:10.3px;line-height:10.3px;color:#605e5c">22</div>
<div class="t " style="left:74.8px;top:674.0px;font-size:10.3px;line-height:10.3px;color:#605e5c">23</div>
<div class="t " style="left:74.8px;top:690.0px;font-size:10.3px;line-height:10.3px;color:#605e5c">24</div>
<div class="t " style="left:74.8px;top:705.9px;font-size:10.3px;line-height:10.3px;color:#605e5c">25</div>
<div class="t " style="left:74.8px;top:721.8px;font-size:10.3px;line-height:10.3px;color:#605e5c">26</div>
<div class="t " style="left:74.8px;top:737.8px;font-size:10.3px;line-height:10.3px;color:#605e5c">27</div>
<div class="t " style="left:74.8px;top:753.7px;font-size:10.3px;line-height:10.3px;color:#605e5c">28</div>
<div class="t " style="left:74.8px;top:769.6px;font-size:10.3px;line-height:10.3px;color:#605e5c">29</div>
<div class="t " style="left:74.8px;top:785.5px;font-size:10.3px;line-height:10.3px;color:#605e5c">30</div>
<div class="t " style="left:74.8px;top:801.5px;font-size:10.3px;line-height:10.3px;color:#605e5c">31</div>
<div class="t " style="left:74.8px;top:817.4px;font-size:10.3px;line-height:10.3px;color:#605e5c">32</div>
<div class="t " style="left:74.8px;top:833.3px;font-size:10.3px;line-height:10.3px;color:#605e5c">33</div>
<div class="t " style="left:74.8px;top:849.3px;font-size:10.3px;line-height:10.3px;color:#605e5c">34</div>
<div class="t " style="left:74.8px;top:865.2px;font-size:10.3px;line-height:10.3px;color:#605e5c">35</div>
<div class="t " style="left:74.8px;top:881.1px;font-size:10.3px;line-height:10.3px;color:#605e5c">36</div>
<div class="t " style="left:74.8px;top:897.1px;font-size:10.3px;line-height:10.3px;color:#605e5c">37</div>
<div class="t " style="left:74.8px;top:913.0px;font-size:10.3px;line-height:10.3px;color:#605e5c">38</div>
<div class="a" style="left:95.4px;top:320.0px;width:1423.5px;height:15.93px;background:#2f5496"></div>
<div class="t g" style="left:97.4px;top:324.1px;font-size:10.8px;line-height:10.8px;color:#ffffff;transform:scaleX(0.9691);transform-origin:0 0">Type</div>
<div class="t g" style="left:204.6px;top:324.1px;font-size:10.8px;line-height:10.8px;color:#ffffff;transform:scaleX(0.9319);transform-origin:0 0">Assignee</div>
<div class="t g" style="left:352.8px;top:324.1px;font-size:10.8px;line-height:10.8px;color:#ffffff;transform:scaleX(0.9345);transform-origin:0 0">Issue key</div>
<div class="t g" style="left:424.0px;top:324.1px;font-size:10.8px;line-height:10.8px;color:#ffffff;transform:scaleX(0.9664);transform-origin:0 0">Summary</div>
<div class="t g" style="left:1082.8px;top:324.1px;font-size:10.8px;line-height:10.8px;color:#ffffff;transform:scaleX(0.9533);transform-origin:0 0">Status</div>
<div class="t g" style="left:1206.2px;top:324.1px;font-size:10.8px;line-height:10.8px;color:#ffffff;transform:scaleX(0.9602);transform-origin:0 0">Sum of Hours</div>
<div class="t g" style="left:1277.4px;top:324.1px;font-size:10.8px;line-height:10.8px;color:#ffffff;transform:scaleX(0.9755);transform-origin:0 0"># of Tickets</div>
<div class="t g" style="left:1374.5px;top:324.1px;font-size:10.8px;line-height:10.8px;color:#ffffff;transform:scaleX(0.9758);transform-origin:0 0">Comments</div>
<svg class="a" style="left:189.6px;top:321.2px;" width="13" height="13" viewBox="0 0 13 13"><rect x="0" y="0" width="12.6" height="12.6" fill="#fff"/><path d="M3.5 5 H9.5 L6.5 8.3Z" fill="#6b6b6b"/></svg>
<svg class="a" style="left:409.0px;top:321.2px;" width="13" height="13" viewBox="0 0 13 13"><rect x="0" y="0" width="12.6" height="12.6" fill="#fff"/><path d="M3.5 5 H9.5 L6.5 8.3Z" fill="#6b6b6b"/></svg>
<svg class="a" style="left:1067.8px;top:321.2px;" width="13" height="13" viewBox="0 0 13 13"><rect x="0" y="0" width="12.6" height="12.6" fill="#fff"/><path d="M3.5 5 H9.5 L6.5 8.3Z" fill="#6b6b6b"/></svg>
<svg class="a" style="left:1191.2px;top:321.2px;" width="13" height="13" viewBox="0 0 13 13"><rect x="0" y="0" width="12.6" height="12.6" fill="#fff"/><path d="M3.5 5 H9.5 L6.5 8.3Z" fill="#6b6b6b"/></svg>
<svg class="a" style="left:337.8px;top:321.2px;" width="13" height="13" viewBox="0 0 13 13"><rect x="0" y="0" width="12.6" height="12.6" fill="#fff"/><path d="M5 2.5 H11 L8.5 5.5 V8 L7.5 8.7 V5.5 Z" fill="#6b6b6b"/><path d="M2 8 H6 L4 10.5Z" fill="#6b6b6b"/></svg>
<div class="a" style="left:95.4px;top:335.93px;width:107.2px;height:350.46px;background:#8eaadb"></div>
<div class="a" style="left:95.4px;top:702.32px;width:107.2px;height:31.86px;background:#8eaadb"></div>
<div class="a" style="left:95.4px;top:686.39px;width:1277.1px;height:15.93px;background:#8eaadb"></div>
<div class="a" style="left:95.4px;top:734.18px;width:1277.1px;height:15.93px;background:#8eaadb"></div>
<div class="a" style="left:202.6px;top:335.93px;width:148.2px;height:79.65px;background:#d9e1f2"></div>
<div class="a" style="left:202.6px;top:415.58px;width:1169.9px;height:15.93px;background:#d9d9d9"></div>
<div class="a" style="left:422.0px;top:335.93px;width:658.8px;height:15.93px;background:#d9e1f2"></div>
<div class="a" style="left:350.8px;top:335.93px;width:71.2px;height:15.93px;background:#ffffff"></div>
<div class="a" style="left:422.0px;top:351.86px;width:658.8px;height:15.93px;background:#d9e1f2"></div>
<div class="a" style="left:350.8px;top:351.86px;width:71.2px;height:15.93px;background:#ffffff"></div>
<div class="a" style="left:422.0px;top:367.79px;width:658.8px;height:15.93px;background:#d9e1f2"></div>
<div class="a" style="left:350.8px;top:367.79px;width:71.2px;height:15.93px;background:#ffffff"></div>
<div class="a" style="left:422.0px;top:383.72px;width:658.8px;height:15.93px;background:#d9e1f2"></div>
<div class="a" style="left:350.8px;top:383.72px;width:71.2px;height:15.93px;background:#ffffff"></div>
<div class="a" style="left:422.0px;top:399.65px;width:658.8px;height:15.93px;background:#d9e1f2"></div>
<div class="a" style="left:350.8px;top:399.65px;width:71.2px;height:15.93px;background:#ffffff"></div>
<div class="a" style="left:202.6px;top:431.51px;width:148.2px;height:111.51px;background:#d9e1f2"></div>
<div class="a" style="left:202.6px;top:543.02px;width:1169.9px;height:15.93px;background:#d9d9d9"></div>
<div class="a" style="left:422.0px;top:431.51px;width:658.8px;height:15.93px;background:#d9e1f2"></div>
<div class="a" style="left:350.8px;top:431.51px;width:71.2px;height:15.93px;background:#ffffff"></div>
<div class="a" style="left:422.0px;top:447.44px;width:658.8px;height:15.93px;background:#d9e1f2"></div>
<div class="a" style="left:350.8px;top:447.44px;width:71.2px;height:15.93px;background:#ffffff"></div>
<div class="a" style="left:422.0px;top:463.37px;width:658.8px;height:15.93px;background:#d9e1f2"></div>
<div class="a" style="left:350.8px;top:463.37px;width:71.2px;height:15.93px;background:#ffffff"></div>
<div class="a" style="left:422.0px;top:479.3px;width:658.8px;height:15.93px;background:#d9e1f2"></div>
<div class="a" style="left:350.8px;top:479.3px;width:71.2px;height:15.93px;background:#ffffff"></div>
<div class="a" style="left:422.0px;top:495.23px;width:658.8px;height:15.93px;background:#d9e1f2"></div>
<div class="a" style="left:350.8px;top:495.23px;width:71.2px;height:15.93px;background:#ffffff"></div>
<div class="a" style="left:422.0px;top:511.16px;width:658.8px;height:15.93px;background:#d9e1f2"></div>
<div class="a" style="left:350.8px;top:511.16px;width:71.2px;height:15.93px;background:#ffffff"></div>
<div class="a" style="left:422.0px;top:527.09px;width:658.8px;height:15.93px;background:#d9e1f2"></div>
<div class="a" style="left:350.8px;top:527.09px;width:71.2px;height:15.93px;background:#ffffff"></div>
<div class="a" style="left:202.6px;top:558.95px;width:148.2px;height:47.79px;background:#d9e1f2"></div>
<div class="a" style="left:202.6px;top:606.74px;width:1169.9px;height:15.93px;background:#d9d9d9"></div>
<div class="a" style="left:422.0px;top:558.95px;width:658.8px;height:15.93px;background:#d9e1f2"></div>
<div class="a" style="left:350.8px;top:558.95px;width:71.2px;height:15.93px;background:#ffffff"></div>
<div class="a" style="left:422.0px;top:574.88px;width:658.8px;height:15.93px;background:#d9e1f2"></div>
<div class="a" style="left:350.8px;top:574.88px;width:71.2px;height:15.93px;background:#ffffff"></div>
<div class="a" style="left:422.0px;top:590.81px;width:658.8px;height:15.93px;background:#d9e1f2"></div>
<div class="a" style="left:350.8px;top:590.81px;width:71.2px;height:15.93px;background:#ffffff"></div>
<div class="a" style="left:202.6px;top:622.67px;width:148.2px;height:47.79px;background:#d9e1f2"></div>
<div class="a" style="left:202.6px;top:670.46px;width:1169.9px;height:15.93px;background:#d9d9d9"></div>
<div class="a" style="left:422.0px;top:622.67px;width:658.8px;height:15.93px;background:#d9e1f2"></div>
<div class="a" style="left:350.8px;top:622.67px;width:71.2px;height:15.93px;background:#ffffff"></div>
<div class="a" style="left:422.0px;top:638.6px;width:658.8px;height:15.93px;background:#d9e1f2"></div>
<div class="a" style="left:350.8px;top:638.6px;width:71.2px;height:15.93px;background:#ffffff"></div>
<div class="a" style="left:422.0px;top:654.53px;width:658.8px;height:15.93px;background:#d9e1f2"></div>
<div class="a" style="left:350.8px;top:654.53px;width:71.2px;height:15.93px;background:#ffffff"></div>
<div class="a" style="left:202.6px;top:702.32px;width:148.2px;height:15.93px;background:#d9e1f2"></div>
<div class="a" style="left:202.6px;top:718.25px;width:1169.9px;height:15.93px;background:#d9d9d9"></div>
<div class="a" style="left:422.0px;top:702.32px;width:658.8px;height:15.93px;background:#d9e1f2"></div>
<div class="a" style="left:350.8px;top:702.32px;width:71.2px;height:15.93px;background:#ffffff"></div>
<div class="a" style="left:350.8px;top:351.86px;width:730.0px;height:15.93px;background:#8fc453"></div>
<div class="a" style="left:350.8px;top:367.79px;width:730.0px;height:15.93px;background:#8fc453"></div>
<div class="a" style="left:350.8px;top:463.37px;width:730.0px;height:15.93px;background:#8fc453"></div>
<div class="a" style="left:202.6px;top:415.08px;width:148.20000000000002px;height:1px;background:#6a8fcc"></div>
<div class="a" style="left:422.0px;top:351.36px;width:658.8px;height:1px;background:#6a8fcc"></div>
<div class="a" style="left:350.8px;top:351.36px;width:71.19999999999999px;height:1px;background:#e4e6ea"></div>
<div class="a" style="left:422.0px;top:367.29px;width:658.8px;height:1px;background:#6a8fcc"></div>
<div class="a" style="left:350.8px;top:367.29px;width:71.19999999999999px;height:1px;background:#e4e6ea"></div>
<div class="a" style="left:422.0px;top:383.22px;width:658.8px;height:1px;background:#6a8fcc"></div>
<div class="a" style="left:350.8px;top:383.22px;width:71.19999999999999px;height:1px;background:#e4e6ea"></div>
<div class="a" style="left:422.0px;top:399.15px;width:658.8px;height:1px;background:#6a8fcc"></div>
<div class="a" style="left:350.8px;top:399.15px;width:71.19999999999999px;height:1px;background:#e4e6ea"></div>
<div class="a" style="left:422.0px;top:415.08px;width:658.8px;height:1px;background:#6a8fcc"></div>
<div class="a" style="left:350.8px;top:415.08px;width:71.19999999999999px;height:1px;background:#e4e6ea"></div>
<div class="a" style="left:202.6px;top:542.52px;width:148.20000000000002px;height:1px;background:#6a8fcc"></div>
<div class="a" style="left:422.0px;top:446.94px;width:658.8px;height:1px;background:#6a8fcc"></div>
<div class="a" style="left:350.8px;top:446.94px;width:71.19999999999999px;height:1px;background:#e4e6ea"></div>
<div class="a" style="left:422.0px;top:462.87px;width:658.8px;height:1px;background:#6a8fcc"></div>
<div class="a" style="left:350.8px;top:462.87px;width:71.19999999999999px;height:1px;background:#e4e6ea"></div>
<div class="a" style="left:422.0px;top:478.8px;width:658.8px;height:1px;background:#6a8fcc"></div>
<div class="a" style="left:350.8px;top:478.8px;width:71.19999999999999px;height:1px;background:#e4e6ea"></div>
<div class="a" style="left:422.0px;top:494.73px;width:658.8px;height:1px;background:#6a8fcc"></div>
<div class="a" style="left:350.8px;top:494.73px;width:71.19999999999999px;height:1px;background:#e4e6ea"></div>
<div class="a" style="left:422.0px;top:510.66px;width:658.8px;height:1px;background:#6a8fcc"></div>
<div class="a" style="left:350.8px;top:510.66px;width:71.19999999999999px;height:1px;background:#e4e6ea"></div>
<div class="a" style="left:422.0px;top:526.59px;width:658.8px;height:1px;background:#6a8fcc"></div>
<div class="a" style="left:350.8px;top:526.59px;width:71.19999999999999px;height:1px;background:#e4e6ea"></div>
<div class="a" style="left:422.0px;top:542.52px;width:658.8px;height:1px;background:#6a8fcc"></div>
<div class="a" style="left:350.8px;top:542.52px;width:71.19999999999999px;height:1px;background:#e4e6ea"></div>
<div class="a" style="left:202.6px;top:606.24px;width:148.20000000000002px;height:1px;background:#6a8fcc"></div>
<div class="a" style="left:422.0px;top:574.38px;width:658.8px;height:1px;background:#6a8fcc"></div>
<div class="a" style="left:350.8px;top:574.38px;width:71.19999999999999px;height:1px;background:#e4e6ea"></div>
<div class="a" style="left:422.0px;top:590.31px;width:658.8px;height:1px;background:#6a8fcc"></div>
<div class="a" style="left:350.8px;top:590.31px;width:71.19999999999999px;height:1px;background:#e4e6ea"></div>
<div class="a" style="left:422.0px;top:606.24px;width:658.8px;height:1px;background:#6a8fcc"></div>
<div class="a" style="left:350.8px;top:606.24px;width:71.19999999999999px;height:1px;background:#e4e6ea"></div>
<div class="a" style="left:202.6px;top:669.96px;width:148.20000000000002px;height:1px;background:#6a8fcc"></div>
<div class="a" style="left:422.0px;top:638.1px;width:658.8px;height:1px;background:#6a8fcc"></div>
<div class="a" style="left:350.8px;top:638.1px;width:71.19999999999999px;height:1px;background:#e4e6ea"></div>
<div class="a" style="left:422.0px;top:654.03px;width:658.8px;height:1px;background:#6a8fcc"></div>
<div class="a" style="left:350.8px;top:654.03px;width:71.19999999999999px;height:1px;background:#e4e6ea"></div>
<div class="a" style="left:422.0px;top:669.96px;width:658.8px;height:1px;background:#6a8fcc"></div>
<div class="a" style="left:350.8px;top:669.96px;width:71.19999999999999px;height:1px;background:#e4e6ea"></div>
<div class="a" style="left:202.6px;top:717.75px;width:148.20000000000002px;height:1px;background:#6a8fcc"></div>
<div class="a" style="left:422.0px;top:717.75px;width:658.8px;height:1px;background:#6a8fcc"></div>
<div class="a" style="left:350.8px;top:717.75px;width:71.19999999999999px;height:1px;background:#e4e6ea"></div>
<div class="a" style="left:350.8px;top:367.29px;width:71.19999999999999px;height:1px;background:#b9d79c"></div>
<div class="a" style="left:422.0px;top:367.29px;width:658.8px;height:1px;background:#5f8aa0"></div>
<div class="a" style="left:350.8px;top:383.22px;width:71.19999999999999px;height:1px;background:#b9d79c"></div>
<div class="a" style="left:422.0px;top:383.22px;width:658.8px;height:1px;background:#5f8aa0"></div>
<div class="a" style="left:350.8px;top:478.8px;width:71.19999999999999px;height:1px;background:#b9d79c"></div>
<div class="a" style="left:422.0px;top:478.8px;width:658.8px;height:1px;background:#5f8aa0"></div>
<div class="a" style="left:95.4px;top:685.79px;width:1277.1px;height:1.3px;background:#b6c9ef"></div>
<div class="a" style="left:95.4px;top:701.72px;width:1277.1px;height:1.3px;background:#b6c9ef"></div>
<div class="a" style="left:95.4px;top:733.58px;width:1277.1px;height:1.3px;background:#b6c9ef"></div>
<div class="a" style="left:95.4px;top:747.91px;width:1277.1px;height:1.6px;background:#2f4f8f"></div>
<div class="a" style="left:1204.2px;top:383.92px;width:70.60000000000005px;height:14.93px;background:#ff1a00"></div>
<div class="a" style="left:1204.2px;top:415.78px;width:70.60000000000005px;height:14.93px;background:#ff1a00"></div>
<div class="a" style="left:1204.2px;top:463.57px;width:70.60000000000005px;height:14.93px;background:#ff1a00"></div>
<div class="a" style="left:1204.2px;top:527.29px;width:70.60000000000005px;height:14.93px;background:#ff1a00"></div>
<div class="a" style="left:1204.2px;top:543.22px;width:70.60000000000005px;height:14.93px;background:#ff1a00"></div>
<div class="a" style="left:1204.2px;top:559.15px;width:70.60000000000005px;height:14.93px;background:#ff1a00"></div>
<div class="a" style="left:1204.2px;top:606.94px;width:70.60000000000005px;height:14.93px;background:#ff1a00"></div>
<div class="a" style="left:1204.2px;top:686.59px;width:70.60000000000005px;height:14.93px;background:#ff1a00"></div>
<div class="a" style="left:1204.2px;top:750.31px;width:70.60000000000005px;height:14.93px;background:#ff1a00"></div>
<svg class="a" style="left:98.4px;top:341.7px;" width="8" height="8" viewBox="0 0 8 8"><rect x="0.5" y="0.5" width="6.6" height="6.6" rx="0.6" fill="#fff" stroke="#2a3550" stroke-width="1"/><line x1="2" y1="3.8" x2="5.6" y2="3.8" stroke="#444" stroke-width="1.1"/></svg>
<div class="t g" style="left:107.9px;top:340.0px;font-size:10.8px;line-height:10.8px;color:#f4f6fb;transform:scaleX(0.8576);transform-origin:0 0">BED</div>
<svg class="a" style="left:205.6px;top:341.7px;" width="8" height="8" viewBox="0 0 8 8"><rect x="0.5" y="0.5" width="6.6" height="6.6" rx="0.6" fill="#fff" stroke="#3b3b3b" stroke-width="1"/><line x1="2" y1="3.8" x2="5.6" y2="3.8" stroke="#444" stroke-width="1.1"/></svg>
<div class="t g" style="left:215.1px;top:340.0px;font-size:10.8px;line-height:10.8px;color:#1b1b1b;transform:scaleX(0.9592);transform-origin:0 0">Bharat Sharma</div>
<svg class="a" style="left:353.8px;top:341.7px;" width="8" height="8" viewBox="0 0 8 8"><rect x="0.5" y="0.5" width="6.6" height="6.6" rx="0.6" fill="#fff" stroke="#3b3b3b" stroke-width="1"/><line x1="2" y1="3.8" x2="5.6" y2="3.8" stroke="#444" stroke-width="1.1"/></svg>
<div class="t g" style="left:363.3px;top:340.0px;font-size:10.8px;line-height:10.8px;color:#1b1b1b;transform:scaleX(0.8870);transform-origin:0 0">SFB2C-662</div>
<svg class="a" style="left:425.0px;top:341.7px;" width="8" height="8" viewBox="0 0 8 8"><rect x="0.5" y="0.5" width="6.6" height="6.6" rx="0.6" fill="#fff" stroke="#3b3b3b" stroke-width="1"/><line x1="2" y1="3.8" x2="5.6" y2="3.8" stroke="#444" stroke-width="1.1"/></svg>
<div class="t g" style="left:434.5px;top:340.0px;font-size:10.8px;line-height:10.8px;color:#1b1b1b;transform:scaleX(1.1814);transform-origin:0 0">]</div>
<div class="t g" style="left:1082.8px;top:340.0px;font-size:10.8px;line-height:10.8px;color:#1b1b1b;transform:scaleX(0.9916);transform-origin:0 0">Hold</div>
<div class="t g" style="left:1266.9px;top:340.0px;font-size:10.8px;line-height:10.8px;color:#1b1b1b;transform:scaleX(0.9754);transform-origin:0 0">4</div>
<div class="t g" style="left:1364.0px;top:340.0px;font-size:10.8px;line-height:10.8px;color:#1b1b1b;transform:scaleX(0.9754);transform-origin:0 0">1</div>
<svg class="a" style="left:353.8px;top:357.7px;" width="8" height="8" viewBox="0 0 8 8"><rect x="0.5" y="0.5" width="6.6" height="6.6" rx="0.6" fill="#fff" stroke="#3b3b3b" stroke-width="1"/><line x1="2" y1="3.8" x2="5.6" y2="3.8" stroke="#444" stroke-width="1.1"/></svg>
<div class="t g" style="left:363.3px;top:355.9px;font-size:10.8px;line-height:10.8px;color:#1b1b1b;transform:scaleX(0.8870);transform-origin:0 0">SFB2C-767</div>
<svg class="a" style="left:425.0px;top:357.7px;" width="8" height="8" viewBox="0 0 8 8"><rect x="0.5" y="0.5" width="6.6" height="6.6" rx="0.6" fill="#fff" stroke="#3b3b3b" stroke-width="1"/><line x1="2" y1="3.8" x2="5.6" y2="3.8" stroke="#444" stroke-width="1.1"/></svg>
<div class="t g" style="left:434.5px;top:355.9px;font-size:10.8px;line-height:10.8px;color:#1b1b1b;transform:scaleX(0.9678);transform-origin:0 0">4-06-01.02 Edit Address</div>
<div class="t g" style="left:1082.8px;top:355.9px;font-size:10.8px;line-height:10.8px;color:#1b1b1b;transform:scaleX(0.9940);transform-origin:0 0">In Development</div>
<div class="t g" style="left:1266.9px;top:355.9px;font-size:10.8px;line-height:10.8px;color:#1b1b1b;transform:scaleX(0.9754);transform-origin:0 0">4</div>
<div class="t g" style="left:1364.0px;top:355.9px;font-size:10.8px;line-height:10.8px;color:#1b1b1b;transform:scaleX(0.9754);transform-origin:0 0">1</div>
<div class="t g" style="left:1374.5px;top:355.9px;font-size:10.8px;line-height:10.8px;color:#1b1b1b;transform:scaleX(0.9846);transform-origin:0 0">Week1</div>
<svg class="a" style="left:353.8px;top:373.6px;" width="8" height="8" viewBox="0 0 8 8"><rect x="0.5" y="0.5" width="6.6" height="6.6" rx="0.6" fill="#fff" stroke="#3b3b3b" stroke-width="1"/><line x1="2" y1="3.8" x2="5.6" y2="3.8" stroke="#444" stroke-width="1.1"/></svg>
<div class="t g" style="left:363.3px;top:371.8px;font-size:10.8px;line-height:10.8px;color:#1b1b1b;transform:scaleX(0.8870);transform-origin:0 0">SFB2C-771</div>
<svg class="a" style="left:425.0px;top:373.6px;" width="8" height="8" viewBox="0 0 8 8"><rect x="0.5" y="0.5" width="6.6" height="6.6" rx="0.6" fill="#fff" stroke="#3b3b3b" stroke-width="1"/><line x1="2" y1="3.8" x2="5.6" y2="3.8" stroke="#444" stroke-width="1.1"/></svg>
<div class="t g" style="left:434.5px;top:371.8px;font-size:10.8px;line-height:10.8px;color:#1b1b1b;transform:scaleX(0.9805);transform-origin:0 0">4-06-01.06 Add New</div>
<div class="t g" style="left:1082.8px;top:371.8px;font-size:10.8px;line-height:10.8px;color:#1b1b1b;transform:scaleX(0.9940);transform-origin:0 0">In Development</div>
<div class="t g" style="left:1266.9px;top:371.8px;font-size:10.8px;line-height:10.8px;color:#1b1b1b;transform:scaleX(0.9754);transform-origin:0 0">3</div>
<div class="t g" style="left:1364.0px;top:371.8px;font-size:10.8px;line-height:10.8px;color:#1b1b1b;transform:scaleX(0.9754);transform-origin:0 0">1</div>
<div class="t g" style="left:1374.5px;top:371.8px;font-size:10.8px;line-height:10.8px;color:#1b1b1b;transform:scaleX(0.9846);transform-origin:0 0">Week1</div>
<svg class="a" style="left:353.8px;top:389.5px;" width="8" height="8" viewBox="0 0 8 8"><rect x="0.5" y="0.5" width="6.6" height="6.6" rx="0.6" fill="#fff" stroke="#3b3b3b" stroke-width="1"/><line x1="2" y1="3.8" x2="5.6" y2="3.8" stroke="#444" stroke-width="1.1"/></svg>
<div class="t g" style="left:363.3px;top:387.8px;font-size:10.8px;line-height:10.8px;color:#1b1b1b;transform:scaleX(0.8955);transform-origin:0 0">SFB2C-1056</div>
<svg class="a" style="left:425.0px;top:389.5px;" width="8" height="8" viewBox="0 0 8 8"><rect x="0.5" y="0.5" width="6.6" height="6.6" rx="0.6" fill="#fff" stroke="#3b3b3b" stroke-width="1"/><line x1="2" y1="3.8" x2="5.6" y2="3.8" stroke="#444" stroke-width="1.1"/></svg>
<div class="t g" style="left:434.5px;top:387.8px;font-size:10.8px;line-height:10.8px;color:#1b1b1b;transform:scaleX(0.9662);transform-origin:0 0">Account Creation - Required Fields</div>
<div class="t g" style="left:1082.8px;top:387.8px;font-size:10.8px;line-height:10.8px;color:#1b1b1b;transform:scaleX(0.9940);transform-origin:0 0">In Development</div>
<div class="t g" style="left:1261.1px;top:387.8px;font-size:10.8px;line-height:10.8px;color:#6a0800;transform:scaleX(0.9754);transform-origin:0 0">20</div>
<div class="t g" style="left:1364.0px;top:387.8px;font-size:10.8px;line-height:10.8px;color:#1b1b1b;transform:scaleX(0.9754);transform-origin:0 0">1</div>
<div class="t g" style="left:1374.5px;top:387.8px;font-size:10.8px;line-height:10.8px;color:#1b1b1b;transform:scaleX(0.9846);transform-origin:0 0">Week2</div>
<svg class="a" style="left:353.8px;top:405.4px;" width="8" height="8" viewBox="0 0 8 8"><rect x="0.5" y="0.5" width="6.6" height="6.6" rx="0.6" fill="#fff" stroke="#3b3b3b" stroke-width="1"/><line x1="2" y1="3.8" x2="5.6" y2="3.8" stroke="#444" stroke-width="1.1"/></svg>
<div class="t g" style="left:363.3px;top:403.7px;font-size:10.8px;line-height:10.8px;color:#1b1b1b;transform:scaleX(0.8955);transform-origin:0 0">SFB2C-1297</div>
<svg class="a" style="left:425.0px;top:405.4px;" width="8" height="8" viewBox="0 0 8 8"><rect x="0.5" y="0.5" width="6.6" height="6.6" rx="0.6" fill="#fff" stroke="#3b3b3b" stroke-width="1"/><line x1="2" y1="3.8" x2="5.6" y2="3.8" stroke="#444" stroke-width="1.1"/></svg>
<div class="t g" style="left:434.5px;top:403.7px;font-size:10.8px;line-height:10.8px;color:#1b1b1b;transform:scaleX(0.9666);transform-origin:0 0">Additional Schema Types</div>
<div class="t g" style="left:1082.8px;top:403.7px;font-size:10.8px;line-height:10.8px;color:#1b1b1b;transform:scaleX(1.0052);transform-origin:0 0">Implementation Queue</div>
<div class="t g" style="left:1266.9px;top:403.7px;font-size:10.8px;line-height:10.8px;color:#1b1b1b;transform:scaleX(0.9754);transform-origin:0 0">8</div>
<div class="t g" style="left:1364.0px;top:403.7px;font-size:10.8px;line-height:10.8px;color:#1b1b1b;transform:scaleX(0.9754);transform-origin:0 0">1</div>
<div class="t g" style="left:1374.5px;top:403.7px;font-size:10.8px;line-height:10.8px;color:#1b1b1b;transform:scaleX(0.9846);transform-origin:0 0">Week2</div>
<svg class="a" style="left:205.6px;top:437.3px;" width="8" height="8" viewBox="0 0 8 8"><rect x="0.5" y="0.5" width="6.6" height="6.6" rx="0.6" fill="#fff" stroke="#3b3b3b" stroke-width="1"/><line x1="2" y1="3.8" x2="5.6" y2="3.8" stroke="#444" stroke-width="1.1"/></svg>
<div class="t g" style="left:215.1px;top:435.6px;font-size:10.8px;line-height:10.8px;color:#1b1b1b;transform:scaleX(0.9759);transform-origin:0 0">Khyati Aggarwal</div>
<svg class="a" style="left:353.8px;top:437.3px;" width="8" height="8" viewBox="0 0 8 8"><rect x="0.5" y="0.5" width="6.6" height="6.6" rx="0.6" fill="#fff" stroke="#3b3b3b" stroke-width="1"/><line x1="2" y1="3.8" x2="5.6" y2="3.8" stroke="#444" stroke-width="1.1"/></svg>
<div class="t g" style="left:363.3px;top:435.6px;font-size:10.8px;line-height:10.8px;color:#1b1b1b;transform:scaleX(0.8870);transform-origin:0 0">SFB2C-460</div>
<svg class="a" style="left:425.0px;top:437.3px;" width="8" height="8" viewBox="0 0 8 8"><rect x="0.5" y="0.5" width="6.6" height="6.6" rx="0.6" fill="#fff" stroke="#3b3b3b" stroke-width="1"/><line x1="2" y1="3.8" x2="5.6" y2="3.8" stroke="#444" stroke-width="1.1"/></svg>
<div class="t g" style="left:434.5px;top:435.6px;font-size:10.8px;line-height:10.8px;color:#1b1b1b;transform:scaleX(0.9862);transform-origin:0 0">3-04.06 Payment Methods</div>
<div class="t g" style="left:1082.8px;top:435.6px;font-size:10.8px;line-height:10.8px;color:#1b1b1b;transform:scaleX(1.0052);transform-origin:0 0">Implementation Queue</div>
<div class="t g" style="left:1266.9px;top:435.6px;font-size:10.8px;line-height:10.8px;color:#1b1b1b;transform:scaleX(0.9754);transform-origin:0 0">2</div>
<div class="t g" style="left:1364.0px;top:435.6px;font-size:10.8px;line-height:10.8px;color:#1b1b1b;transform:scaleX(0.9754);transform-origin:0 0">1</div>
<div class="t g" style="left:1374.5px;top:435.6px;font-size:10.8px;line-height:10.8px;color:#1b1b1b;transform:scaleX(0.9846);transform-origin:0 0">Week1</div>
<svg class="a" style="left:353.8px;top:453.2px;" width="8" height="8" viewBox="0 0 8 8"><rect x="0.5" y="0.5" width="6.6" height="6.6" rx="0.6" fill="#fff" stroke="#3b3b3b" stroke-width="1"/><line x1="2" y1="3.8" x2="5.6" y2="3.8" stroke="#444" stroke-width="1.1"/></svg>
<div class="t g" style="left:363.3px;top:451.5px;font-size:10.8px;line-height:10.8px;color:#1b1b1b;transform:scaleX(0.8870);transform-origin:0 0">SFB2C-462</div>
<svg class="a" style="left:425.0px;top:453.2px;" width="8" height="8" viewBox="0 0 8 8"><rect x="0.5" y="0.5" width="6.6" height="6.6" rx="0.6" fill="#fff" stroke="#3b3b3b" stroke-width="1"/><line x1="2" y1="3.8" x2="5.6" y2="3.8" stroke="#444" stroke-width="1.1"/></svg>
<div class="t g" style="left:434.5px;top:451.5px;font-size:10.8px;line-height:10.8px;color:#1b1b1b;transform:scaleX(0.9380);transform-origin:0 0">3-04.08 PayPal</div>
<div class="t g" style="left:1082.8px;top:451.5px;font-size:10.8px;line-height:10.8px;color:#1b1b1b;transform:scaleX(1.0052);transform-origin:0 0">Implementation Queue</div>
<div class="t g" style="left:1266.9px;top:451.5px;font-size:10.8px;line-height:10.8px;color:#1b1b1b;transform:scaleX(0.9754);transform-origin:0 0">6</div>
<div class="t g" style="left:1364.0px;top:451.5px;font-size:10.8px;line-height:10.8px;color:#1b1b1b;transform:scaleX(0.9754);transform-origin:0 0">1</div>
<svg class="a" style="left:353.8px;top:469.2px;" width="8" height="8" viewBox="0 0 8 8"><rect x="0.5" y="0.5" width="6.6" height="6.6" rx="0.6" fill="#fff" stroke="#3b3b3b" stroke-width="1"/><line x1="2" y1="3.8" x2="5.6" y2="3.8" stroke="#444" stroke-width="1.1"/></svg>
<div class="t g" style="left:363.3px;top:467.4px;font-size:10.8px;line-height:10.8px;color:#1b1b1b;transform:scaleX(0.8870);transform-origin:0 0">SFB2C-598</div>
<svg class="a" style="left:425.0px;top:469.2px;" width="8" height="8" viewBox="0 0 8 8"><rect x="0.5" y="0.5" width="6.6" height="6.6" rx="0.6" fill="#fff" stroke="#3b3b3b" stroke-width="1"/><line x1="2" y1="3.8" x2="5.6" y2="3.8" stroke="#444" stroke-width="1.1"/></svg>
<div class="t g" style="left:434.5px;top:467.4px;font-size:10.8px;line-height:10.8px;color:#1b1b1b;transform:scaleX(0.9820);transform-origin:0 0">Braintree - new merchant id, paypal, and gpay</div>
<div class="t g" style="left:1082.8px;top:467.4px;font-size:10.8px;line-height:10.8px;color:#1b1b1b;transform:scaleX(0.9940);transform-origin:0 0">In Development</div>
<div class="t g" style="left:1261.1px;top:467.4px;font-size:10.8px;line-height:10.8px;color:#6a0800;transform:scaleX(0.9754);transform-origin:0 0">32</div>
<div class="t g" style="left:1364.0px;top:467.4px;font-size:10.8px;line-height:10.8px;color:#1b1b1b;transform:scaleX(0.9754);transform-origin:0 0">1</div>
<div class="t g" style="left:1374.5px;top:467.4px;font-size:10.8px;line-height:10.8px;color:#1b1b1b;transform:scaleX(0.9846);transform-origin:0 0">Week1</div>
<svg class="a" style="left:353.8px;top:485.1px;" width="8" height="8" viewBox="0 0 8 8"><rect x="0.5" y="0.5" width="6.6" height="6.6" rx="0.6" fill="#fff" stroke="#3b3b3b" stroke-width="1"/><line x1="2" y1="3.8" x2="5.6" y2="3.8" stroke="#444" stroke-width="1.1"/></svg>
<div class="t g" style="left:363.3px;top:483.4px;font-size:10.8px;line-height:10.8px;color:#1b1b1b;transform:scaleX(0.8870);transform-origin:0 0">SFB2C-464</div>
<svg class="a" style="left:425.0px;top:485.1px;" width="8" height="8" viewBox="0 0 8 8"><rect x="0.5" y="0.5" width="6.6" height="6.6" rx="0.6" fill="#fff" stroke="#3b3b3b" stroke-width="1"/><line x1="2" y1="3.8" x2="5.6" y2="3.8" stroke="#444" stroke-width="1.1"/></svg>
<div class="t g" style="left:434.5px;top:483.4px;font-size:10.8px;line-height:10.8px;color:#1b1b1b;transform:scaleX(0.9777);transform-origin:0 0">3-04.10 Save payment methods site preference</div>
<div class="t g" style="left:1082.8px;top:483.4px;font-size:10.8px;line-height:10.8px;color:#1b1b1b;transform:scaleX(1.0052);transform-origin:0 0">Implementation Queue</div>
<div class="t g" style="left:1266.9px;top:483.4px;font-size:10.8px;line-height:10.8px;color:#1b1b1b;transform:scaleX(0.9754);transform-origin:0 0">2</div>
<div class="t g" style="left:1364.0px;top:483.4px;font-size:10.8px;line-height:10.8px;color:#1b1b1b;transform:scaleX(0.9754);transform-origin:0 0">1</div>
<div class="t g" style="left:1374.5px;top:483.4px;font-size:10.8px;line-height:10.8px;color:#1b1b1b;transform:scaleX(0.9846);transform-origin:0 0">Week1</div>
<svg class="a" style="left:353.8px;top:501.0px;" width="8" height="8" viewBox="0 0 8 8"><rect x="0.5" y="0.5" width="6.6" height="6.6" rx="0.6" fill="#fff" stroke="#3b3b3b" stroke-width="1"/><line x1="2" y1="3.8" x2="5.6" y2="3.8" stroke="#444" stroke-width="1.1"/></svg>
<div class="t g" style="left:363.3px;top:499.3px;font-size:10.8px;line-height:10.8px;color:#1b1b1b;transform:scaleX(0.8870);transform-origin:0 0">SFB2C-465</div>
<svg class="a" style="left:425.0px;top:501.0px;" width="8" height="8" viewBox="0 0 8 8"><rect x="0.5" y="0.5" width="6.6" height="6.6" rx="0.6" fill="#fff" stroke="#3b3b3b" stroke-width="1"/><line x1="2" y1="3.8" x2="5.6" y2="3.8" stroke="#444" stroke-width="1.1"/></svg>
<div class="t g" style="left:434.5px;top:499.3px;font-size:10.8px;line-height:10.8px;color:#1b1b1b;transform:scaleX(0.9847);transform-origin:0 0">3-04.11 Add Payment</div>
<div class="t g" style="left:1082.8px;top:499.3px;font-size:10.8px;line-height:10.8px;color:#1b1b1b;transform:scaleX(1.0052);transform-origin:0 0">Implementation Queue</div>
<div class="t g" style="left:1266.9px;top:499.3px;font-size:10.8px;line-height:10.8px;color:#1b1b1b;transform:scaleX(0.9754);transform-origin:0 0">2</div>
<div class="t g" style="left:1364.0px;top:499.3px;font-size:10.8px;line-height:10.8px;color:#1b1b1b;transform:scaleX(0.9754);transform-origin:0 0">1</div>
<svg class="a" style="left:353.8px;top:517.0px;" width="8" height="8" viewBox="0 0 8 8"><rect x="0.5" y="0.5" width="6.6" height="6.6" rx="0.6" fill="#fff" stroke="#3b3b3b" stroke-width="1"/><line x1="2" y1="3.8" x2="5.6" y2="3.8" stroke="#444" stroke-width="1.1"/></svg>
<div class="t g" style="left:363.3px;top:515.2px;font-size:10.8px;line-height:10.8px;color:#1b1b1b;transform:scaleX(0.8870);transform-origin:0 0">SFB2C-716</div>
<svg class="a" style="left:425.0px;top:517.0px;" width="8" height="8" viewBox="0 0 8 8"><rect x="0.5" y="0.5" width="6.6" height="6.6" rx="0.6" fill="#fff" stroke="#3b3b3b" stroke-width="1"/><line x1="2" y1="3.8" x2="5.6" y2="3.8" stroke="#444" stroke-width="1.1"/></svg>
<div class="t g" style="left:434.5px;top:515.2px;font-size:10.8px;line-height:10.8px;color:#1b1b1b;transform:scaleX(0.9684);transform-origin:0 0">Prorated Order Discounts added to OCAPI Order Object</div>
<div class="t g" style="left:1082.8px;top:515.2px;font-size:10.8px;line-height:10.8px;color:#1b1b1b;transform:scaleX(1.0052);transform-origin:0 0">Implementation Queue</div>
<div class="t g" style="left:1266.9px;top:515.2px;font-size:10.8px;line-height:10.8px;color:#1b1b1b;transform:scaleX(0.9754);transform-origin:0 0">8</div>
<div class="t g" style="left:1364.0px;top:515.2px;font-size:10.8px;line-height:10.8px;color:#1b1b1b;transform:scaleX(0.9754);transform-origin:0 0">1</div>
<div class="t g" style="left:1374.5px;top:515.2px;font-size:10.8px;line-height:10.8px;color:#1b1b1b;transform:scaleX(0.9846);transform-origin:0 0">Week2</div>
<svg class="a" style="left:353.8px;top:532.9px;" width="8" height="8" viewBox="0 0 8 8"><rect x="0.5" y="0.5" width="6.6" height="6.6" rx="0.6" fill="#fff" stroke="#3b3b3b" stroke-width="1"/><line x1="2" y1="3.8" x2="5.6" y2="3.8" stroke="#444" stroke-width="1.1"/></svg>
<div class="t g" style="left:363.3px;top:531.1px;font-size:10.8px;line-height:10.8px;color:#1b1b1b;transform:scaleX(0.8870);transform-origin:0 0">SFB2C-816</div>
<svg class="a" style="left:425.0px;top:532.9px;" width="8" height="8" viewBox="0 0 8 8"><rect x="0.5" y="0.5" width="6.6" height="6.6" rx="0.6" fill="#fff" stroke="#3b3b3b" stroke-width="1"/><line x1="2" y1="3.8" x2="5.6" y2="3.8" stroke="#444" stroke-width="1.1"/></svg>
<div class="t g" style="left:434.5px;top:531.1px;font-size:10.8px;line-height:10.8px;color:#1b1b1b;transform:scaleX(0.9616);transform-origin:0 0">Customized Pricing for Flat/Setup and Run Costs</div>
<div class="t g" style="left:1082.8px;top:531.1px;font-size:10.8px;line-height:10.8px;color:#1b1b1b;transform:scaleX(0.9916);transform-origin:0 0">Hold</div>
<div class="t g" style="left:1261.1px;top:531.1px;font-size:10.8px;line-height:10.8px;color:#6a0800;transform:scaleX(0.9754);transform-origin:0 0">20</div>
<div class="t g" style="left:1364.0px;top:531.1px;font-size:10.8px;line-height:10.8px;color:#1b1b1b;transform:scaleX(0.9754);transform-origin:0 0">1</div>
<div class="t g" style="left:1374.5px;top:531.1px;font-size:10.8px;line-height:10.8px;color:#1b1b1b;transform:scaleX(0.9846);transform-origin:0 0">Week2</div>
<svg class="a" style="left:205.6px;top:564.8px;" width="8" height="8" viewBox="0 0 8 8"><rect x="0.5" y="0.5" width="6.6" height="6.6" rx="0.6" fill="#fff" stroke="#3b3b3b" stroke-width="1"/><line x1="2" y1="3.8" x2="5.6" y2="3.8" stroke="#444" stroke-width="1.1"/></svg>
<div class="t g" style="left:215.1px;top:563.0px;font-size:10.8px;line-height:10.8px;color:#1b1b1b;transform:scaleX(0.9629);transform-origin:0 0">Udayachandra U</div>
<svg class="a" style="left:353.8px;top:564.8px;" width="8" height="8" viewBox="0 0 8 8"><rect x="0.5" y="0.5" width="6.6" height="6.6" rx="0.6" fill="#fff" stroke="#3b3b3b" stroke-width="1"/><line x1="2" y1="3.8" x2="5.6" y2="3.8" stroke="#444" stroke-width="1.1"/></svg>
<div class="t g" style="left:363.3px;top:563.0px;font-size:10.8px;line-height:10.8px;color:#1b1b1b;transform:scaleX(0.8870);transform-origin:0 0">SFB2C-595</div>
<svg class="a" style="left:425.0px;top:564.8px;" width="8" height="8" viewBox="0 0 8 8"><rect x="0.5" y="0.5" width="6.6" height="6.6" rx="0.6" fill="#fff" stroke="#3b3b3b" stroke-width="1"/><line x1="2" y1="3.8" x2="5.6" y2="3.8" stroke="#444" stroke-width="1.1"/></svg>
<div class="t g" style="left:434.5px;top:563.0px;font-size:10.8px;line-height:10.8px;color:#1b1b1b;transform:scaleX(0.9672);transform-origin:0 0">Melissa Data (Checkout Shipping Section - Address Validation) Part 1</div>
<div class="t g" style="left:1082.8px;top:563.0px;font-size:10.8px;line-height:10.8px;color:#1b1b1b;transform:scaleX(1.0052);transform-origin:0 0">Implementation Queue</div>
<div class="t g" style="left:1261.1px;top:563.0px;font-size:10.8px;line-height:10.8px;color:#6a0800;transform:scaleX(0.9754);transform-origin:0 0">24</div>
<div class="t g" style="left:1364.0px;top:563.0px;font-size:10.8px;line-height:10.8px;color:#1b1b1b;transform:scaleX(0.9754);transform-origin:0 0">1</div>
<div class="t g" style="left:1374.5px;top:563.0px;font-size:10.8px;line-height:10.8px;color:#1b1b1b;transform:scaleX(0.9846);transform-origin:0 0">Week2</div>
<svg class="a" style="left:353.8px;top:580.7px;" width="8" height="8" viewBox="0 0 8 8"><rect x="0.5" y="0.5" width="6.6" height="6.6" rx="0.6" fill="#fff" stroke="#3b3b3b" stroke-width="1"/><line x1="2" y1="3.8" x2="5.6" y2="3.8" stroke="#444" stroke-width="1.1"/></svg>
<div class="t g" style="left:363.3px;top:578.9px;font-size:10.8px;line-height:10.8px;color:#1b1b1b;transform:scaleX(0.8870);transform-origin:0 0">SFB2C-847</div>
<svg class="a" style="left:425.0px;top:580.7px;" width="8" height="8" viewBox="0 0 8 8"><rect x="0.5" y="0.5" width="6.6" height="6.6" rx="0.6" fill="#fff" stroke="#3b3b3b" stroke-width="1"/><line x1="2" y1="3.8" x2="5.6" y2="3.8" stroke="#444" stroke-width="1.1"/></svg>
<div class="t g" style="left:434.5px;top:578.9px;font-size:10.8px;line-height:10.8px;color:#1b1b1b;transform:scaleX(0.9792);transform-origin:0 0">B-01-01.02 Product Info</div>
<div class="t g" style="left:1082.8px;top:578.9px;font-size:10.8px;line-height:10.8px;color:#1b1b1b;transform:scaleX(0.9941);transform-origin:0 0">New</div>
<div class="t g" style="left:1266.9px;top:578.9px;font-size:10.8px;line-height:10.8px;color:#1b1b1b;transform:scaleX(0.9754);transform-origin:0 0">4</div>
<div class="t g" style="left:1364.0px;top:578.9px;font-size:10.8px;line-height:10.8px;color:#1b1b1b;transform:scaleX(0.9754);transform-origin:0 0">1</div>
<div class="t g" style="left:1374.5px;top:578.9px;font-size:10.8px;line-height:10.8px;color:#1b1b1b;transform:scaleX(0.9846);transform-origin:0 0">Week1</div>
<svg class="a" style="left:353.8px;top:596.6px;" width="8" height="8" viewBox="0 0 8 8"><rect x="0.5" y="0.5" width="6.6" height="6.6" rx="0.6" fill="#fff" stroke="#3b3b3b" stroke-width="1"/><line x1="2" y1="3.8" x2="5.6" y2="3.8" stroke="#444" stroke-width="1.1"/></svg>
<div class="t g" style="left:363.3px;top:594.9px;font-size:10.8px;line-height:10.8px;color:#1b1b1b;transform:scaleX(0.8870);transform-origin:0 0">SFB2C-851</div>
<svg class="a" style="left:425.0px;top:596.6px;" width="8" height="8" viewBox="0 0 8 8"><rect x="0.5" y="0.5" width="6.6" height="6.6" rx="0.6" fill="#fff" stroke="#3b3b3b" stroke-width="1"/><line x1="2" y1="3.8" x2="5.6" y2="3.8" stroke="#444" stroke-width="1.1"/></svg>
<div class="t g" style="left:434.5px;top:594.9px;font-size:10.8px;line-height:10.8px;color:#1b1b1b;transform:scaleX(0.9873);transform-origin:0 0">B-01-01.07 Comparable Attributes</div>
<div class="t g" style="left:1082.8px;top:594.9px;font-size:10.8px;line-height:10.8px;color:#1b1b1b;transform:scaleX(0.9941);transform-origin:0 0">New</div>
<div class="t g" style="left:1266.9px;top:594.9px;font-size:10.8px;line-height:10.8px;color:#1b1b1b;transform:scaleX(0.9754);transform-origin:0 0">2</div>
<div class="t g" style="left:1364.0px;top:594.9px;font-size:10.8px;line-height:10.8px;color:#1b1b1b;transform:scaleX(0.9754);transform-origin:0 0">1</div>
<div class="t g" style="left:1374.5px;top:594.9px;font-size:10.8px;line-height:10.8px;color:#1b1b1b;transform:scaleX(0.9846);transform-origin:0 0">Week1</div>
<svg class="a" style="left:205.6px;top:628.5px;" width="8" height="8" viewBox="0 0 8 8"><rect x="0.5" y="0.5" width="6.6" height="6.6" rx="0.6" fill="#fff" stroke="#3b3b3b" stroke-width="1"/><line x1="2" y1="3.8" x2="5.6" y2="3.8" stroke="#444" stroke-width="1.1"/></svg>
<div class="t g" style="left:215.1px;top:626.7px;font-size:10.8px;line-height:10.8px;color:#1b1b1b;transform:scaleX(0.9677);transform-origin:0 0">Varun Sharma</div>
<svg class="a" style="left:353.8px;top:628.5px;" width="8" height="8" viewBox="0 0 8 8"><rect x="0.5" y="0.5" width="6.6" height="6.6" rx="0.6" fill="#fff" stroke="#3b3b3b" stroke-width="1"/><line x1="2" y1="3.8" x2="5.6" y2="3.8" stroke="#444" stroke-width="1.1"/></svg>
<div class="t g" style="left:363.3px;top:626.7px;font-size:10.8px;line-height:10.8px;color:#1b1b1b;transform:scaleX(0.8870);transform-origin:0 0">SFB2C-824</div>
<svg class="a" style="left:425.0px;top:628.5px;" width="8" height="8" viewBox="0 0 8 8"><rect x="0.5" y="0.5" width="6.6" height="6.6" rx="0.6" fill="#fff" stroke="#3b3b3b" stroke-width="1"/><line x1="2" y1="3.8" x2="5.6" y2="3.8" stroke="#444" stroke-width="1.1"/></svg>
<div class="t g" style="left:434.5px;top:626.7px;font-size:10.8px;line-height:10.8px;color:#1b1b1b;transform:scaleX(0.9633);transform-origin:0 0">4-03.03 Address Book</div>
<div class="t g" style="left:1082.8px;top:626.7px;font-size:10.8px;line-height:10.8px;color:#1b1b1b;transform:scaleX(0.9940);transform-origin:0 0">In Development</div>
<div class="t g" style="left:1266.9px;top:626.7px;font-size:10.8px;line-height:10.8px;color:#1b1b1b;transform:scaleX(0.9754);transform-origin:0 0">6</div>
<div class="t g" style="left:1364.0px;top:626.7px;font-size:10.8px;line-height:10.8px;color:#1b1b1b;transform:scaleX(0.9754);transform-origin:0 0">1</div>
<svg class="a" style="left:353.8px;top:644.4px;" width="8" height="8" viewBox="0 0 8 8"><rect x="0.5" y="0.5" width="6.6" height="6.6" rx="0.6" fill="#fff" stroke="#3b3b3b" stroke-width="1"/><line x1="2" y1="3.8" x2="5.6" y2="3.8" stroke="#444" stroke-width="1.1"/></svg>
<div class="t g" style="left:363.3px;top:642.7px;font-size:10.8px;line-height:10.8px;color:#1b1b1b;transform:scaleX(0.8955);transform-origin:0 0">SFB2C-1059</div>
<svg class="a" style="left:425.0px;top:644.4px;" width="8" height="8" viewBox="0 0 8 8"><rect x="0.5" y="0.5" width="6.6" height="6.6" rx="0.6" fill="#fff" stroke="#3b3b3b" stroke-width="1"/><line x1="2" y1="3.8" x2="5.6" y2="3.8" stroke="#444" stroke-width="1.1"/></svg>
<div class="t g" style="left:434.5px;top:642.7px;font-size:10.8px;line-height:10.8px;color:#1b1b1b;transform:scaleX(0.9916);transform-origin:0 0">Industry Type</div>
<div class="t g" style="left:1082.8px;top:642.7px;font-size:10.8px;line-height:10.8px;color:#1b1b1b;transform:scaleX(0.9941);transform-origin:0 0">New</div>
<div class="t g" style="left:1266.9px;top:642.7px;font-size:10.8px;line-height:10.8px;color:#1b1b1b;transform:scaleX(0.9754);transform-origin:0 0">4</div>
<div class="t g" style="left:1364.0px;top:642.7px;font-size:10.8px;line-height:10.8px;color:#1b1b1b;transform:scaleX(0.9754);transform-origin:0 0">1</div>
<svg class="a" style="left:353.8px;top:660.3px;" width="8" height="8" viewBox="0 0 8 8"><rect x="0.5" y="0.5" width="6.6" height="6.6" rx="0.6" fill="#fff" stroke="#3b3b3b" stroke-width="1"/><line x1="2" y1="3.8" x2="5.6" y2="3.8" stroke="#444" stroke-width="1.1"/></svg>
<div class="t g" style="left:363.3px;top:658.6px;font-size:10.8px;line-height:10.8px;color:#1b1b1b;transform:scaleX(0.8955);transform-origin:0 0">SFB2C-1341</div>
<svg class="a" style="left:425.0px;top:660.3px;" width="8" height="8" viewBox="0 0 8 8"><rect x="0.5" y="0.5" width="6.6" height="6.6" rx="0.6" fill="#fff" stroke="#3b3b3b" stroke-width="1"/><line x1="2" y1="3.8" x2="5.6" y2="3.8" stroke="#444" stroke-width="1.1"/></svg>
<div class="t g" style="left:434.5px;top:658.6px;font-size:10.8px;line-height:10.8px;color:#1b1b1b;transform:scaleX(0.9852);transform-origin:0 0">Add to Cart CTA on PLP is not coming from Master level attribute.  if not defined View Product should be shown on Product Tile</div>
<div class="t g" style="left:1082.8px;top:658.6px;font-size:10.8px;line-height:10.8px;color:#1b1b1b;transform:scaleX(1.0052);transform-origin:0 0">Implementation Queue</div>
<div class="t g" style="left:1266.9px;top:658.6px;font-size:10.8px;line-height:10.8px;color:#1b1b1b;transform:scaleX(0.9754);transform-origin:0 0">3</div>
<div class="t g" style="left:1364.0px;top:658.6px;font-size:10.8px;line-height:10.8px;color:#1b1b1b;transform:scaleX(0.9754);transform-origin:0 0">1</div>
<svg class="a" style="left:98.4px;top:708.1px;" width="8" height="8" viewBox="0 0 8 8"><rect x="0.5" y="0.5" width="6.6" height="6.6" rx="0.6" fill="#fff" stroke="#2a3550" stroke-width="1"/><line x1="2" y1="3.8" x2="5.6" y2="3.8" stroke="#444" stroke-width="1.1"/></svg>
<div class="t g" style="left:107.9px;top:706.4px;font-size:10.8px;line-height:10.8px;color:#f4f6fb;transform:scaleX(0.9786);transform-origin:0 0">BAClarification</div>
<svg class="a" style="left:205.6px;top:708.1px;" width="8" height="8" viewBox="0 0 8 8"><rect x="0.5" y="0.5" width="6.6" height="6.6" rx="0.6" fill="#fff" stroke="#3b3b3b" stroke-width="1"/><line x1="2" y1="3.8" x2="5.6" y2="3.8" stroke="#444" stroke-width="1.1"/></svg>
<div class="t g" style="left:215.1px;top:706.4px;font-size:10.8px;line-height:10.8px;color:#1b1b1b;transform:scaleX(0.9435);transform-origin:0 0">Spandana Kachavarapu</div>
<svg class="a" style="left:353.8px;top:708.1px;" width="8" height="8" viewBox="0 0 8 8"><rect x="0.5" y="0.5" width="6.6" height="6.6" rx="0.6" fill="#fff" stroke="#3b3b3b" stroke-width="1"/><line x1="2" y1="3.8" x2="5.6" y2="3.8" stroke="#444" stroke-width="1.1"/></svg>
<div class="t g" style="left:363.3px;top:706.4px;font-size:10.8px;line-height:10.8px;color:#1b1b1b;transform:scaleX(0.8870);transform-origin:0 0">SFB2C-700</div>
<svg class="a" style="left:425.0px;top:708.1px;" width="8" height="8" viewBox="0 0 8 8"><rect x="0.5" y="0.5" width="6.6" height="6.6" rx="0.6" fill="#fff" stroke="#3b3b3b" stroke-width="1"/><line x1="2" y1="3.8" x2="5.6" y2="3.8" stroke="#444" stroke-width="1.1"/></svg>
<div class="t g" style="left:434.5px;top:706.4px;font-size:10.8px;line-height:10.8px;color:#1b1b1b;transform:scaleX(0.9720);transform-origin:0 0">3-01.13 Edit</div>
<div class="t g" style="left:1082.8px;top:706.4px;font-size:10.8px;line-height:10.8px;color:#1b1b1b;transform:scaleX(1.0052);transform-origin:0 0">Implementation Queue</div>
<div class="t g" style="left:1261.1px;top:706.4px;font-size:10.8px;line-height:10.8px;color:#1b1b1b;transform:scaleX(0.9754);transform-origin:0 0">16</div>
<div class="t g" style="left:1364.0px;top:706.4px;font-size:10.8px;line-height:10.8px;color:#1b1b1b;transform:scaleX(0.9754);transform-origin:0 0">1</div>
<div class="t g" style="left:1374.5px;top:706.4px;font-size:10.8px;line-height:10.8px;color:#1b1b1b;transform:scaleX(0.9798);transform-origin:0 0">Week1+Week2</div>
<div class="t " style="left:204.6px;top:419.6px;font-size:10.8px;line-height:10.8px;color:#1b1b1b;font-weight:bold;transform:scaleX(0.9028);transform-origin:0 0">Bharat Sharma Total</div>
<div class="t " style="left:1261.3px;top:419.6px;font-size:10.8px;line-height:10.8px;color:#1b1b1b;font-weight:bold;transform:scaleX(0.9608);transform-origin:0 0">39</div>
<div class="t " style="left:1364.1px;top:419.6px;font-size:10.8px;line-height:10.8px;color:#1b1b1b;font-weight:bold;transform:scaleX(0.9608);transform-origin:0 0">5</div>
<div class="t " style="left:204.6px;top:547.1px;font-size:10.8px;line-height:10.8px;color:#1b1b1b;font-weight:bold;transform:scaleX(0.8952);transform-origin:0 0">Khyati Aggarwal Total</div>
<div class="t " style="left:1261.3px;top:547.1px;font-size:10.8px;line-height:10.8px;color:#1b1b1b;font-weight:bold;transform:scaleX(0.9608);transform-origin:0 0">72</div>
<div class="t " style="left:1364.1px;top:547.1px;font-size:10.8px;line-height:10.8px;color:#1b1b1b;font-weight:bold;transform:scaleX(0.9608);transform-origin:0 0">7</div>
<div class="t " style="left:204.6px;top:610.8px;font-size:10.8px;line-height:10.8px;color:#1b1b1b;font-weight:bold;transform:scaleX(0.9086);transform-origin:0 0">Udayachandra U Total</div>
<div class="t " style="left:1261.3px;top:610.8px;font-size:10.8px;line-height:10.8px;color:#1b1b1b;font-weight:bold;transform:scaleX(0.9608);transform-origin:0 0">30</div>
<div class="t " style="left:1364.1px;top:610.8px;font-size:10.8px;line-height:10.8px;color:#1b1b1b;font-weight:bold;transform:scaleX(0.9608);transform-origin:0 0">3</div>
<div class="t " style="left:204.6px;top:674.5px;font-size:10.8px;line-height:10.8px;color:#1b1b1b;font-weight:bold;transform:scaleX(0.9105);transform-origin:0 0">Varun Sharma Total</div>
<div class="t " style="left:1261.3px;top:674.5px;font-size:10.8px;line-height:10.8px;color:#1b1b1b;font-weight:bold;transform:scaleX(0.9608);transform-origin:0 0">13</div>
<div class="t " style="left:1364.1px;top:674.5px;font-size:10.8px;line-height:10.8px;color:#1b1b1b;font-weight:bold;transform:scaleX(0.9608);transform-origin:0 0">3</div>
<div class="t " style="left:204.6px;top:722.3px;font-size:10.8px;line-height:10.8px;color:#1b1b1b;font-weight:bold;transform:scaleX(0.8888);transform-origin:0 0">Spandana Kachavarapu Total</div>
<div class="t " style="left:1261.3px;top:722.3px;font-size:10.8px;line-height:10.8px;color:#1b1b1b;font-weight:bold;transform:scaleX(0.9608);transform-origin:0 0">16</div>
<div class="t " style="left:1364.1px;top:722.3px;font-size:10.8px;line-height:10.8px;color:#1b1b1b;font-weight:bold;transform:scaleX(0.9608);transform-origin:0 0">1</div>
<div class="t " style="left:97.4px;top:690.4px;font-size:10.8px;line-height:10.8px;color:#ffffff;font-weight:bold;transform:scaleX(0.8813);transform-origin:0 0">BED Total</div>
<div class="t " style="left:1255.5px;top:690.4px;font-size:10.8px;line-height:10.8px;color:#ffffff;font-weight:bold;transform:scaleX(0.9608);transform-origin:0 0">154</div>
<div class="t " style="left:1358.4px;top:690.4px;font-size:10.8px;line-height:10.8px;color:#ffffff;font-weight:bold;transform:scaleX(0.9608);transform-origin:0 0">18</div>
<div class="t " style="left:97.4px;top:738.2px;font-size:10.8px;line-height:10.8px;color:#ffffff;font-weight:bold;transform:scaleX(0.8894);transform-origin:0 0">BAClarification Total</div>
<div class="t " style="left:1261.3px;top:738.2px;font-size:10.8px;line-height:10.8px;color:#ffffff;font-weight:bold;transform:scaleX(0.9608);transform-origin:0 0">16</div>
<div class="t " style="left:1364.1px;top:738.2px;font-size:10.8px;line-height:10.8px;color:#ffffff;font-weight:bold;transform:scaleX(0.9608);transform-origin:0 0">1</div>
<div class="t " style="left:97.4px;top:754.2px;font-size:10.8px;line-height:10.8px;color:#1b1b1b;font-weight:bold;transform:scaleX(0.9127);transform-origin:0 0">Grand Total</div>
<div class="t " style="left:1255.5px;top:754.2px;font-size:10.8px;line-height:10.8px;color:#3a0a00;font-weight:bold;transform:scaleX(0.9608);transform-origin:0 0">170</div>
<div class="t " style="left:1358.4px;top:754.2px;font-size:10.8px;line-height:10.8px;color:#1b1b1b;font-weight:bold;transform:scaleX(0.9608);transform-origin:0 0">19</div>
<div class="a" style="left:422.0px;top:398.45px;width:659.5px;height:1.3px;background:#1e6b41"></div>
<div class="a" style="left:422.0px;top:414.38px;width:658.8px;height:1.6px;background:#1e6b41"></div>
<div class="a" style="left:422.0px;top:398.45px;width:1.4px;height:16.93px;background:#1e6b41"></div>
<div class="a" style="left:1079.8px;top:398.45px;width:1.4px;height:16.93px;background:#1e6b41"></div>
<div class="a" style="left:1078.8px;top:413.58px;width:3.2px;height:3.2px;background:#1e6b41;outline:1px solid #fff"></div>
<svg class="a" style="left:1017px;top:474px;" width="15" height="14" viewBox="0 0 15 14"><path d="M5.5 0.8 H8.9 V4.3 H12.8 V7.7 H8.9 V11.7 H5.5 V7.7 H1.2 V4.3 H5.5Z" fill="#fff" stroke="#000" stroke-width="1.3" stroke-linejoin="round"/></svg>
<div class="a" style="left:1529.3px;top:300.5px;width:11.2px;height:20.5px;background:#f5f4f6"></div>
<div class="a" style="left:1529.3px;top:321px;width:11.2px;height:604.5px;background:#e7e6e9"></div>
<div class="a" style="left:1529.6px;top:321px;width:10.6px;height:13.2px;background:#ffffff"></div>
<div class="a" style="left:1529.6px;top:334.2px;width:10.6px;height:1px;background:#cfcfcf"></div>
<svg class="a" style="left:1530px;top:321px;" width="10" height="13" viewBox="0 0 10 13"><path d="M2.5 8 L5 5 L7.5 8Z" fill="#777"/></svg>
<div class="a" style="left:1529.8px;top:335.6px;width:10.2px;height:392px;background:#ffffff;border:1px solid #e3e3e3"></div>
<div class="a" style="left:66.5px;top:926.2px;width:1474.5px;height:12.8px;background:#f3f2f1"></div>
<div class="a" style="left:96.4px;top:926.8px;width:1432.2px;height:12px;background:#e6e5e8"></div>
<div class="a" style="left:96.4px;top:926.8px;width:12.9px;height:12px;background:#fff;border:1px solid #dcdcdc"></div>
<svg class="a" style="left:96.4px;top:926.8px;" width="13" height="12" viewBox="0 0 13 12"><path d="M7.5 3.5 V8.5 L4.5 6Z" fill="#444"/></svg>
<div class="a" style="left:109.3px;top:926.8px;width:659px;height:12px;background:#fff;border:1px solid #d6d6d6"></div>
<div class="a" style="left:1515.5px;top:926.8px;width:13.1px;height:12px;background:#fff;border:1px solid #dcdcdc"></div>
<svg class="a" style="left:1515.5px;top:926.8px;" width="13" height="12" viewBox="0 0 13 12"><path d="M5.5 3.5 V8.5 L8.5 6Z" fill="#444"/></svg>
<div class="a" style="left:1529.3px;top:926.2px;width:11.2px;height:12.8px;background:#f3f2f1"></div>
<svg class="a" style="left:1529.3px;top:916px;" width="11" height="10" viewBox="0 0 11 10"><path d="M2.5 3.5 H7.5 L5 6.5Z" fill="#666"/></svg>
<div class="a" style="left:66.5px;top:939px;width:1474.5px;height:26px;background:#f4f3f5"></div>
<svg class="a" style="left:74px;top:946px;" width="40" height="16" viewBox="0 0 40 16"><path d="M8 3.5 L4.5 7.5 L8 11.5 M30 3.5 L33.5 7.5 L30 11.5" fill="none" stroke="#b5b5b5" stroke-width="1"/></svg>
<svg class="a" style="left:124px;top:946px;" width="14" height="14" viewBox="0 0 14 14"><path d="M1.5 3.5 H11.5 M1.5 7 H11.5 M1.5 10.5 H11.5" stroke="#444" stroke-width="1.1"/></svg>
<div class="t " style="left:152.6px;top:946.3px;font-size:11px;line-height:11px;color:#424242;font-weight:bold;transform:scaleX(0.9311);transform-origin:0 0">Sprint 7 BED tickets</div>
<div class="a" style="left:150px;top:962.5px;width:103px;height:2.5px;background:#217346"></div>
<svg class="a" style="left:264px;top:945px;" width="16" height="16" viewBox="0 0 16 16"><path d="M8 2.5 V13.5 M2.5 8 H13.5" stroke="#444" stroke-width="1.1"/></svg>
<div class="a" style="left:66.5px;top:965px;width:1474.5px;height:1px;background:#e1e1e1"></div>
<div class="a" style="left:66.5px;top:966px;width:1474.5px;height:17px;background:#ffffff"></div>
<div class="t " style="left:77.6px;top:971.3px;font-size:10px;line-height:10px;color:#555;transform:scaleX(0.9619);transform-origin:0 0">Calculation Mode: Automatic</div>
<div class="t " style="left:214.0px;top:971.3px;font-size:10px;line-height:10px;color:#555;transform:scaleX(0.9404);transform-origin:0 0">Workbook Statistics</div>
<svg class="a" style="left:1284px;top:972px;" width="10" height="8" viewBox="0 0 10 8"><path d="M2 2.5 L4.5 5 L7 2.5" fill="none" stroke="#555" stroke-width="1"/></svg>
<div class="t " style="left:1325.0px;top:971.3px;font-size:10px;line-height:10px;color:#555;transform:scaleX(0.9415);transform-origin:0 0">Give Feedback to Microsoft</div>
<div class="a" style="left:1474.4px;top:975.5px;width:8.4px;height:1px;background:#555"></div>
<div class="t " style="left:1490.0px;top:971.3px;font-size:10px;line-height:10px;color:#555;transform:scaleX(0.8758);transform-origin:0 0">100%</div>
<svg class="a" style="left:1517px;top:969px;" width="12" height="12" viewBox="0 0 12 12"><path d="M6 1.5 V10.5 M1.5 6 H10.5" stroke="#555" stroke-width="1"/></svg>
<div class="a" style="left:12px;top:983px;width:1529px;height:28px;background:#ffffff"></div>
<div class="a" style="left:12px;top:983px;width:38.5px;height:28px;background:#101010"></div>
<svg class="a" style="left:24px;top:992px;" width="16" height="16" viewBox="0 0 16 16"><g fill="#fff"><path d="M1 2.5 L6.3 1.8 V6.8 H1Z"/><path d="M7.2 1.6 L14 0.7 V6.8 H7.2Z"/><path d="M1 7.6 H6.3 V12.6 L1 11.9Z"/><path d="M7.2 7.6 H14 V13.7 L7.2 12.8Z"/></g></svg>
<div class="a" style="left:50.5px;top:983px;width:235px;height:28px;background:#f2f2f2;border-right:1px solid #9a9a9a"></div>
<svg class="a" style="left:58px;top:991px;" width="16" height="16" viewBox="0 0 16 16"><circle cx="9.5" cy="5.5" r="4" fill="none" stroke="#222" stroke-width="1.1"/><line x1="6.7" y1="8.3" x2="2" y2="13" stroke="#222" stroke-width="1.2"/></svg>
<div class="t " style="left:82.8px;top:993.8px;font-size:11.5px;line-height:11.5px;color:#333">Type here to search</div>
<div class="a" style="left:299px;top:983px;width:1px;height:28px;background:#cfcfcf"></div>
<div class="a" style="left:346px;top:983px;width:1px;height:28px;background:#cfcfcf"></div>
<svg class="a" style="left:313px;top:988px;" width="20" height="20" viewBox="0 0 20 20"><rect x="1" y="8" width="9" height="10" fill="none" stroke="#333" stroke-width="1"/><rect x="3" y="13" width="5" height="4" fill="none" stroke="#333" stroke-width=".9"/><rect x="7" y="2" width="11" height="9" fill="#fff" stroke="#333" stroke-width="1"/><path d="M10 7 H15 M13 5 L15 7 L13 9" fill="none" stroke="#1a73e8" stroke-width="1"/></svg>
<div class="t " style="left:382.8px;top:993.0px;font-size:10px;line-height:10px;color:#555;transform:scaleX(0.9287);transform-origin:0 0">Title</div>
<div class="a" style="left:1431.8px;top:983px;width:109px;height:28px;background:#121212"></div>
<div class="t " style="left:1426.5px;top:985.8px;font-size:10.5px;line-height:10.5px;color:#ddd">G</div>
<div class="t " style="left:1427.0px;top:1000.4px;font-size:10.5px;line-height:10.5px;color:#ddd">S</div>
<div class="a" style="left:1420px;top:983px;width:11.8px;height:28px;background:#ffffff"></div>
<div class="t " style="left:1460.1px;top:986.2px;font-size:10px;line-height:10px;color:#e8e8e8;transform:scaleX(0.8648);transform-origin:0 0">11:00</div>
<div class="t " style="left:1447.6px;top:1000.8px;font-size:10px;line-height:10px;color:#e8e8e8;transform:scaleX(0.8817);transform-origin:0 0">28-06-2021</div>
<svg class="a" style="left:1507px;top:989px;" width="16" height="16" viewBox="0 0 16 16"><path d="M1.5 1.5 H12.5 V10.5 H8 L5 13 V10.5 H1.5Z" fill="#eee"/><path d="M3.5 4 H10.5 M3.5 6 H10.5 M3.5 8 H8" stroke="#121212" stroke-width=".9"/><circle cx="11.5" cy="11" r="2" fill="none" stroke="#eee" stroke-width=".9"/></svg>
<div class="a" style="left:1537.2px;top:983px;width:1px;height:28px;background:#444"></div>
<div class="a" style="left:21.4px;top:963px;width:156.6px;height:36px;background:rgba(30,30,30,0.55);border-radius:4px"></div>
<div class="t " style="left:30.8px;top:973.9px;font-size:16.5px;line-height:16.5px;color:#ffffff;transform:scaleX(1.0329);transform-origin:0 0">Krishnan, Vallaree</div>
<div class="a" style="left:1544px;top:158px;width:376px;height:853px;background:#1b1b1b"></div>
<div class="a" style="left:1544px;top:158px;width:376px;height:400px;overflow:hidden"><div class="a" style="left:-47px;top:-12px;width:300px;height:300px;border-radius:50%;background:radial-gradient(circle, rgba(70,72,110,0.55) 0%, rgba(50,52,80,0.35) 35%, rgba(27,27,27,0) 70%)"></div></div>
<div class="a" style="left:1587.5px;top:236.3px;width:120px;height:120px;border-radius:50%;background:#9ea2ff"></div>
<div class="a" style="left:1593.5px;top:242.3px;width:108px;height:108px;border-radius:50%;background:#2b2320"></div>
<div class="a" style="left:1594.7px;top:243.5px;width:105.6px;height:105.6px;border-radius:50%;background:#e8ddd8"></div>
<div class="t " style="left:1624.2px;top:274.1px;font-size:43.46px;line-height:43.46px;color:#5b3a2c;transform:scaleX(0.8055);transform-origin:0 0;-webkit-text-stroke:1.1px #5b3a2c">BS</div>
<div class="t " style="left:1578.0px;top:363.1px;font-size:17px;line-height:17px;color:#ffffff;transform:scaleX(0.9931);transform-origin:0 0">Sharma, Bharat ...</div>
<div class="a" style="left:1759px;top:243.3px;width:106px;height:106px;border-radius:50%;background:#fbdcd5"></div>
<div class="t " style="left:1785.7px;top:274.1px;font-size:43.46px;line-height:43.46px;color:#8a3b28;transform:scaleX(0.9090);transform-origin:0 0;-webkit-text-stroke:1.1px #8a3b28">VK</div>
<div class="t " style="left:1743.5px;top:363.1px;font-size:17px;line-height:17px;color:#ffffff;transform:scaleX(1.0062);transform-origin:0 0">Krishnan, Vallaree</div>
<div class="a" style="left:1594.5px;top:408.5px;width:106px;height:106px;border-radius:50%;background:#d0e1d4"></div>
<div class="t " style="left:1623.4px;top:439.3px;font-size:43.46px;line-height:43.46px;color:#1d4e33;transform:scaleX(0.8314);transform-origin:0 0;-webkit-text-stroke:1.1px #1d4e33">VS</div>
<div class="t " style="left:1578.0px;top:528.1px;font-size:17px;line-height:17px;color:#ffffff;transform:scaleX(0.9870);transform-origin:0 0">Sharma, Var...</div>
<svg class="a" style="left:1700px;top:525px;" width="20" height="22" viewBox="0 0 20 22"><rect x="6.5" y="2" width="7" height="11" rx="3.5" fill="#fff"/><path d="M4 9.5 C4 13.5 6.5 15.5 10 15.5 C13.5 15.5 16 13.5 16 9.5" fill="none" stroke="#fff" stroke-width="1.3"/><line x1="10" y1="15.5" x2="10" y2="19" stroke="#fff" stroke-width="1.3"/><line x1="3" y1="3" x2="17.5" y2="18" stroke="#1b1b1b" stroke-width="3"/><line x1="3" y1="3" x2="17.5" y2="18" stroke="#fff" stroke-width="1.2"/></svg>
<div class="a" style="left:1759px;top:408.5px;width:106px;height:106px;border-radius:50%;background:#e0dcee"></div>
<div class="t " style="left:1783.5px;top:439.3px;font-size:43.46px;line-height:43.46px;color:#3f3a6a;transform:scaleX(0.9081);transform-origin:0 0;-webkit-text-stroke:1.1px #3f3a6a">UU</div>
<div class="t " style="left:1743.5px;top:528.1px;font-size:17px;line-height:17px;color:#ffffff;transform:scaleX(0.9595);transform-origin:0 0">U, UDAYAC...</div>
<svg class="a" style="left:1864px;top:525px;" width="20" height="22" viewBox="0 0 20 22"><rect x="6.5" y="2" width="7" height="11" rx="3.5" fill="#fff"/><path d="M4 9.5 C4 13.5 6.5 15.5 10 15.5 C13.5 15.5 16 13.5 16 9.5" fill="none" stroke="#fff" stroke-width="1.3"/><line x1="10" y1="15.5" x2="10" y2="19" stroke="#fff" stroke-width="1.3"/><line x1="3" y1="3" x2="17.5" y2="18" stroke="#1b1b1b" stroke-width="3"/><line x1="3" y1="3" x2="17.5" y2="18" stroke="#fff" stroke-width="1.2"/></svg>
<div class="a" style="left:1677px;top:573.5px;width:106px;height:106px;border-radius:50%;background:#d7e4ea"></div>
<div class="t " style="left:1705.9px;top:604.3px;font-size:43.46px;line-height:43.46px;color:#23505c;transform:scaleX(0.8314);transform-origin:0 0;-webkit-text-stroke:1.1px #23505c">SK</div>
<div class="t " style="left:1660.5px;top:693.1px;font-size:17px;line-height:17px;color:#ffffff;transform:scaleX(0.9945);transform-origin:0 0">kachavarap...</div>
<svg class="a" style="left:1781px;top:690px;" width="20" height="22" viewBox="0 0 20 22"><rect x="6.5" y="2" width="7" height="11" rx="3.5" fill="#fff"/><path d="M4 9.5 C4 13.5 6.5 15.5 10 15.5 C13.5 15.5 16 13.5 16 9.5" fill="none" stroke="#fff" stroke-width="1.3"/><line x1="10" y1="15.5" x2="10" y2="19" stroke="#fff" stroke-width="1.3"/><line x1="3" y1="3" x2="17.5" y2="18" stroke="#1b1b1b" stroke-width="3"/><line x1="3" y1="3" x2="17.5" y2="18" stroke="#fff" stroke-width="1.2"/></svg>
<div class="a" style="left:1549.5px;top:811.5px;width:361px;height:198px;background:#1f1f1f"></div>
<div class="a" style="left:1687.5px;top:867.5px;width:85.0px;height:85.0px;border-radius:50%;background:#f2d6cf"></div>
<div class="t " style="left:1709.3px;top:892.5px;font-size:34.45px;line-height:34.45px;color:#6e2714;transform:scaleX(0.8987);transform-origin:0 0;-webkit-text-stroke:1.1px #6e2714">KA</div>
<div class="a" style="left:0px;top:1011px;width:1920px;height:8px;background:#1b1b1b"></div>
<div class="a" style="left:0px;top:1018px;width:1920px;height:1.6px;background:#050505"></div>
<div class="a" style="left:0px;top:1019.6px;width:1920px;height:60.4px;background:#291b2e"></div>
<div class="a" style="left:226.9px;top:1076.9px;width:61px;height:3.1px;background:#76b9ed"></div>
<div class="a" style="left:295.6px;top:1076.9px;width:68.6px;height:3.1px;background:#76b9ed"></div>
<div class="a" style="left:376.9px;top:1076.9px;width:61px;height:3.1px;background:#76b9ed"></div>
<div class="a" style="left:451.9px;top:1076.9px;width:61px;height:3.1px;background:#76b9ed"></div>
<div class="a" style="left:526.9px;top:1076.9px;width:61px;height:3.1px;background:#76b9ed"></div>
<div class="a" style="left:601.9px;top:1076.9px;width:61px;height:3.1px;background:#76b9ed"></div>
<div class="a" style="left:676.9px;top:1076.9px;width:61px;height:3.1px;background:#76b9ed"></div>
<div class="a" style="left:751.9px;top:1076.9px;width:61px;height:3.1px;background:#76b9ed"></div>
<div class="a" style="left:826.9px;top:1076.9px;width:61px;height:3.1px;background:#76b9ed"></div>
<div class="a" style="left:901.9px;top:1076.9px;width:61px;height:3.1px;background:#76b9ed"></div>
<div class="a" style="left:976.9px;top:1076.9px;width:61px;height:3.1px;background:#76b9ed"></div>
<div class="a" style="left:1051.9px;top:1076.9px;width:61px;height:3.1px;background:#76b9ed"></div>
<div class="a" style="left:364.2px;top:1076.9px;width:4.6px;height:3.1px;background:#5a7e9c"></div>
<div class="a" style="left:424.6px;top:1076.9px;width:13.1px;height:3.1px;background:#5a7e9c"></div>
<div class="a" style="left:650px;top:1076.9px;width:13px;height:3.1px;background:#5a7e9c"></div>
<div class="a" style="left:1101px;top:1076.9px;width:13px;height:3.1px;background:#5a7e9c"></div>
<div class="a" style="left:295.8px;top:1019.6px;width:68.4px;height:57.3px;background:#4b4150"></div>
<div class="a" style="left:364.2px;top:1019.6px;width:4.6px;height:57.3px;background:#3d3442"></div>
<svg class="a" style="left:22px;top:1036px;" width="28" height="28" viewBox="0 0 28 28"><g fill="#fff"><path d="M1.5 4.5 L11 3.2 V12.6 H1.5Z"/><path d="M12.3 3 L26.5 1 V12.6 H12.3Z"/><path d="M1.5 13.9 H11 V23.3 L1.5 22Z"/><path d="M12.3 13.9 H26.5 V25.5 L12.3 23.5Z"/></g></svg>
<svg class="a" style="left:92px;top:1034px;" width="30" height="30" viewBox="0 0 30 30"><circle cx="19" cy="12.7" r="8.3" fill="none" stroke="#fff" stroke-width="1.6"/><line x1="13" y1="18.7" x2="3.8" y2="27.9" stroke="#fff" stroke-width="1.6"/></svg>
<svg class="a" style="left:166px;top:1036px;" width="28" height="28" viewBox="0 0 28 28"><g fill="none" stroke="#fff" stroke-width="1.5"><rect x="2.5" y="6.5" width="15" height="14"/><path d="M2 2.5 H18 M2 24.5 H18 M1.7 1 V4 M18.3 1 V4 M1.7 23 V26 M18.3 23 V26"/><path d="M25 1.5 V26"/></g><rect x="23.3" y="7.5" width="3.4" height="4" fill="#fff"/></svg>
<svg class="a" style="left:240px;top:1036px;" width="34" height="28" viewBox="0 0 34 28"><path d="M1 3.5 C1 2 2 1 3.5 1 H12 L15 4 H31 C32.3 4 33 4.8 33 6 V25 C33 26.3 32.3 27 31 27 H3 C1.7 27 1 26.3 1 25Z" fill="#e8a821"/><rect x="1" y="6.5" width="32" height="20.5" rx="1.5" fill="#ffd35c"/><path d="M8 27 V16 H26 V27 H21 V21 H13 V27Z" fill="#1e88e5"/></svg>
<svg class="a" style="left:312px;top:1033px;" width="42" height="38" viewBox="0 0 42 38"><circle cx="27" cy="7" r="6" fill="#7b83eb"/><circle cx="36" cy="9.5" r="4.3" fill="#5059c9"/><path d="M31 15 H41 V25 C41 29 38 31 35 31 C32 31 31 29 31 26Z" fill="#5059c9"/><path d="M13 15 H33 V28 C33 33 29 36 23 36 C17 36 13 33 13 28Z" fill="#7b83eb"/><rect x="1.5" y="9" width="20" height="20" rx="2" fill="#4b53bc"/><path d="M6 13.5 H17 V16.5 H13 V25 H10 V16.5 H6Z" fill="#fff"/><circle cx="31.3" cy="28.9" r="7.3" fill="#fff"/><circle cx="31.3" cy="28.9" r="5.8" fill="#c50f1f"/></svg>
<svg class="a" style="left:388px;top:1033px;" width="38" height="34" viewBox="0 0 38 34"><rect x="9" y="1" width="27" height="14" fill="#0364b8"/><rect x="18" y="1" width="9" height="8" fill="#28a8ea"/><rect x="27" y="1" width="9" height="8" fill="#50d9ff"/><rect x="9" y="9" width="9" height="8" fill="#0078d4"/><rect x="18" y="9" width="9" height="8" fill="#0078d4"/><path d="M9 15 L22.5 23 L36 15 V31 C36 32 35 33 34 33 H11 C10 33 9 32 9 31Z" fill="#1490df"/><rect x="1" y="7" width="19" height="19" rx="2" fill="#0a5fb5"/><ellipse cx="10.5" cy="16.5" rx="5" ry="6" fill="none" stroke="#fff" stroke-width="2.6"/></svg>
<svg class="a" style="left:463px;top:1032px;" width="38" height="38" viewBox="0 0 38 38"><defs><linearGradient id="eg" x1="0" y1="0" x2="1" y2="1"><stop offset="0" stop-color="#33bdf0"/><stop offset=".6" stop-color="#1f9de0"/><stop offset="1" stop-color="#50e6a6"/></linearGradient></defs><circle cx="19" cy="19" r="18" fill="url(#eg)"/><path d="M36 21 C35 12 28 7 20 7 C12 7 6 12 6 18 C6 26 13 33 22 33 C28 33 33 30 35.5 26 C31 28 20 28 17 22 C15.5 18.5 18 15.5 22 15.5 C27 15.5 31 17 36 21Z" fill="#1560b0" opacity=".9"/><path d="M22 15.5 C26 15.5 30 18 31 21 H17 C16.5 18 18.5 15.5 22 15.5Z" fill="#291b2e"/></svg>
<svg class="a" style="left:539px;top:1032px;" width="50" height="46" viewBox="0 0 50 46"><circle cx="17" cy="17" r="16.5" fill="#db4437"/><path d="M17 17 L2.7 25.3 A16.5 16.5 0 0 0 25 31.5Z" fill="#0f9d58"/><path d="M17 17 L31.3 8.8 A16.5 16.5 0 0 1 25 31.5Z" fill="#ffcd40"/><circle cx="17" cy="17" r="7.5" fill="#fff"/><circle cx="17" cy="17" r="6" fill="#4285f4"/><circle cx="26.8" cy="26.8" r="11.5" fill="#2a2020"/><ellipse cx="26.8" cy="24" rx="4" ry="5" fill="#b08878"/><path d="M20 36 C21 31 32 31 33.5 36Z" fill="#ddd"/></svg>
<svg class="a" style="left:615px;top:1033px;" width="34" height="34" viewBox="0 0 34 34"><rect x="1" y="1" width="32" height="32" rx="2" fill="#ffd400"/><path d="M18 33 V20.5 C18 19.5 18.8 18.5 20 18.5 H33 L33 31 C33 32 32 33 31 33Z" fill="#3b3b3b"/><path d="M33 18.5 L18 33 H31 C32 33 33 32 33 31Z" fill="#e3a600"/></svg>
<svg class="a" style="left:689px;top:1033px;" width="36" height="36" viewBox="0 0 36 36"><path d="M2 3 H22 L26 7 V33 H2Z" fill="#e8efe0" stroke="#888" stroke-width=".8"/><rect x="3" y="10" width="22" height="21" fill="#8fd14f"/><circle cx="11" cy="17" r="4" fill="none" stroke="#2b6a2b" stroke-width="1.4"/><circle cx="16" cy="11" r="2.3" fill="#fff" stroke="#333" stroke-width=".6"/><circle cx="20" cy="11" r="2.3" fill="#fff" stroke="#333" stroke-width=".6"/><path d="M34 1 L24 25" stroke="#e6a31f" stroke-width="2.4"/><path d="M3 3 H21" stroke="#555" stroke-width="1" stroke-dasharray="1 1.5"/></svg>
<svg class="a" style="left:764px;top:1032px;" width="38" height="38" viewBox="0 0 38 38"><path d="M27.5 2 L36.5 6.5 V31.5 L27.5 36 L12 21.5 L5 27 L2 25 V13 L5 11 L12 16.5Z" fill="#0065a9"/><path d="M27.5 2 L36.5 6.5 V31.5 L27.5 36 V2Z" fill="#1f9cf0"/><path d="M27.5 10.5 V27.5 L16 19Z" fill="#291b2e"/><path d="M2 13 L5 11 L27.5 27.5 V36 Z" fill="#007acc"/></svg>
<svg class="a" style="left:839px;top:1033px;" width="38" height="38" viewBox="0 0 38 38"><ellipse cx="15" cy="19" rx="14" ry="11.5" fill="#cfe4f2" stroke="#8fb4cc" stroke-width=".8"/><circle cx="10" cy="25" r="2.5" fill="#291b2e"/><circle cx="7" cy="16" r="2.4" fill="#e94b3c"/><circle cx="11" cy="11" r="2.3" fill="#5bb55b"/><circle cx="17" cy="9.5" r="2.2" fill="#f5a623"/><path d="M36 1 L18 33" stroke="#d88a2e" stroke-width="2.6"/><path d="M36 1 L31 8" stroke="#f2d6a0" stroke-width="3.8"/></svg>
<svg class="a" style="left:914px;top:1032px;" width="36" height="36" viewBox="0 0 36 36"><rect x="1" y="1" width="34" height="34" rx="6" fill="#ee7b0d"/><rect x="10.5" y="6.5" width="15" height="23" rx="1.5" fill="none" stroke="#fff" stroke-width="1.6"/><rect x="13.5" y="15" width="9" height="7" fill="#fff"/><path d="M15 15 V12.5 C15 10 21 10 21 12.5 V15" fill="none" stroke="#fff" stroke-width="1.3"/><circle cx="18" cy="26.5" r="1" fill="#fff"/></svg>
<svg class="a" style="left:988px;top:1033px;" width="38" height="36" viewBox="0 0 38 36"><rect x="8" y="1" width="28" height="33" rx="2" fill="#41a5ee"/><rect x="8" y="9" width="28" height="8.5" fill="#2b7cd3"/><rect x="8" y="17.5" width="28" height="8.5" fill="#185abd"/><path d="M8 26 H36 V32 C36 33 35 34 34 34 H10 C9 34 8 33 8 32Z" fill="#103f91"/><rect x="1" y="8" width="19" height="19" rx="2" fill="#185abd"/><path d="M4 12 L6.5 23 L10.5 14.5 L14 23 L17 12" fill="none" stroke="#fff" stroke-width="2"/></svg>
<svg class="a" style="left:1065px;top:1032px;" width="34" height="34" viewBox="0 0 34 34"><rect x="1" y="1" width="32" height="32" rx="5" fill="#b30b00"/><path d="M16.2 6.5 C14.8 6.5 14.6 8.5 15.2 11 C16 14.5 18 18.5 20.5 21 C23.5 23.5 27.5 24.5 27.5 22.5 C27.5 20.5 22 20.3 17 21.5 C12.5 22.5 8 25 7.5 27 C7.2 28.5 9 28.3 10.5 26 C12.5 23 15.5 15.5 16.8 10.5 C17.3 8 17.3 6.5 16.2 6.5Z" fill="none" stroke="#fff" stroke-width="1.5" stroke-linejoin="round"/></svg>
<svg class="a" style="left:1174px;top:1039px;" width="24" height="22" viewBox="0 0 24 22"><rect x="7" y="1" width="16" height="10" fill="#0364b8"/><rect x="12" y="1" width="5.5" height="5" fill="#28a8ea"/><rect x="17.5" y="1" width="5.5" height="5" fill="#50d9ff"/><path d="M7 10 L15 15 L23 10 V20 H7Z" fill="#1490df"/><rect x="1" y="5" width="12" height="12" rx="1" fill="#0a5fb5"/><ellipse cx="7" cy="11" rx="3.2" ry="3.8" fill="none" stroke="#fff" stroke-width="1.7"/></svg>
<svg class="a" style="left:1209px;top:1037px;" width="28" height="26" viewBox="0 0 28 26"><circle cx="17" cy="5" r="3.8" fill="#7b83eb"/><circle cx="23" cy="7" r="2.8" fill="#5059c9"/><path d="M9 10 H21 V18 C21 21.5 18.5 23.5 15 23.5 C11.5 23.5 9 21.5 9 18Z" fill="#7b83eb"/><rect x="1" y="6" width="13" height="13" rx="1.5" fill="#4b53bc"/><path d="M4 8.5 H11 V10.5 H8.5 V16.5 H6.5 V10.5 H4Z" fill="#fff"/><circle cx="19.3" cy="19.7" r="5.2" fill="#c4314b"/></svg>
<svg class="a" style="left:1246px;top:1038px;" width="26" height="25" viewBox="0 0 26 25"><circle cx="11.5" cy="11.5" r="10.5" fill="#00aff0"/><circle cx="11.5" cy="11.5" r="8" fill="#fff"/><text x="6.5" y="17" font-size="13" font-weight="bold" font-family="Liberation Sans" fill="#00aff0">S</text><circle cx="18.5" cy="18.5" r="5.5" fill="#fff"/><circle cx="18.5" cy="18.5" r="4.5" fill="#e81123"/><path d="M16.5 16.5 L20.5 20.5 M20.5 16.5 L16.5 20.5" stroke="#fff" stroke-width="1.2"/></svg>
<svg class="a" style="left:1281px;top:1040px;" width="26" height="22" viewBox="0 0 26 22"><path d="M3 18 C0 18 0 12 4 12 C4 7 10 5 13 9 C15 5 22 6 22 11 C26 11 26 18 22 18Z" fill="#8c8590"/><line x1="5" y1="1" x2="21" y2="21" stroke="#291b2e" stroke-width="2.5"/><line x1="5" y1="1" x2="21" y2="21" stroke="#ddd" stroke-width="1.1"/></svg>
<svg class="a" style="left:1318px;top:1038px;" width="24" height="24" viewBox="0 0 24 24"><circle cx="12" cy="11.5" r="11" fill="#0d6e6e"/><path d="M12 3 L13.5 5.5 L16.5 4.5 L17 7.5 L20 8.5 L19 11.5 L20.5 14 L18 15.5 L17.5 18.5 L14.5 18.5 L12 20.5 L9.5 18.5 L6.5 18.5 L6 15.5 L3.5 14 L5 11.5 L4 8.5 L7 7.5 L7.5 4.5 L10.5 5.5Z" fill="#fff"/><circle cx="12" cy="11.5" r="3.5" fill="#0d6e6e"/></svg>
<svg class="a" style="left:1353px;top:1042px;" width="26" height="18" viewBox="0 0 26 18"><path d="M2 14 C0 14 0 10 3 10 C3 6 8 4 11 7 C13 3 19 4 19 9 C21 9 22 11 21.5 14Z" fill="#3aa0e8"/><path d="M8 5 L11 3 L14 5 L12 9 H10Z" fill="#a8d86e"/><circle cx="19.5" cy="12" r="4.8" fill="#2fb344"/><path d="M17.3 12 L19 13.8 L21.8 10.5" fill="none" stroke="#fff" stroke-width="1.1"/></svg>
<svg class="a" style="left:1391px;top:1037px;" width="22" height="26" viewBox="0 0 22 26"><path d="M11 1 L21 4 V13 C21 19 16 23 11 25 C6 23 1 19 1 13 V4Z" fill="#e8561e"/><rect x="5" y="8" width="11" height="9" fill="none" stroke="#fff" stroke-width="1.1"/><rect x="12" y="13" width="5" height="4.5" fill="#fff"/></svg>
<svg class="a" style="left:1426px;top:1037px;" width="24" height="25" viewBox="0 0 24 25"><rect x="1.5" y="9.5" width="21" height="14" rx="3" fill="#9b9a9e" stroke="#bdbcbf" stroke-width="1"/><path d="M6 10 V7 C6 1.5 18 1.5 18 7 V10" fill="none" stroke="#9b9a9e" stroke-width="2.5"/><circle cx="12" cy="15.5" r="2" fill="#fff"/><rect x="11.2" y="15.5" width="1.6" height="4" fill="#fff"/></svg>
<svg class="a" style="left:1462px;top:1037px;" width="26" height="26" viewBox="0 0 26 26"><path d="M10.5 1 L20 4 V12 C20 18 15.5 22 10.5 24 C5.5 22 1 18 1 12 V4Z" fill="#fff"/><path d="M10.5 1 V24 M1 12 H20" stroke="#291b2e" stroke-width="1.2"/><path d="M10.5 12 H20 C20 18 15.5 22 10.5 24Z" fill="#111"/><circle cx="17" cy="19" r="6" fill="#27a243"/><path d="M14.3 19 L16.3 21 L19.8 17" fill="none" stroke="#fff" stroke-width="1.3"/></svg>
<svg class="a" style="left:1498px;top:1038px;" width="24" height="24" viewBox="0 0 24 24"><circle cx="12" cy="12" r="11" fill="#9bb8c8"/><path d="M4 8 C8 3 16 3 20 9 C17 8 14 11 18 14 C21 16 19 21 16 22 C17 17 10 15 7 17 C5 14 9 11 4 8Z" fill="#3f8f4f"/><path d="M13 3 C20 5 23 12 19 19" fill="none" stroke="#2d6fc4" stroke-width="1.5"/></svg>
<svg class="a" style="left:1537px;top:1037px;" width="18" height="26" viewBox="0 0 18 26"><rect x="4.5" y="1" width="9" height="17" rx="4.5" fill="#fff"/><path d="M1.5 13 C1.5 18 5 20.5 9 20.5 C13 20.5 16.5 18 16.5 13" fill="none" stroke="#fff" stroke-width="1.1"/><path d="M9 20.5 V24.5 M5.5 24.5 H12.5" stroke="#fff" stroke-width="1.1"/></svg>
<svg class="a" style="left:1570px;top:1043px;" width="26" height="15" viewBox="0 0 26 15"><rect x="1.5" y="1.5" width="20.5" height="11.5" fill="none" stroke="#fff" stroke-width="1.3"/><rect x="3.5" y="3.5" width="10" height="7.5" fill="#fff"/><rect x="22" y="5" width="2" height="4.5" fill="#fff"/></svg>
<svg class="a" style="left:1608px;top:1040px;" width="22" height="22" viewBox="0 0 22 22"><g fill="none" stroke="#fff" stroke-width="1.1"><path d="M2 19 C2 9 9 3 19 3"/><path d="M6 19 C6 12 11 7 18 7"/><path d="M10 19 C10 15 13 11 17.5 11"/></g><circle cx="15.5" cy="18" r="1.4" fill="#fff"/></svg>
<svg class="a" style="left:1641px;top:1040px;" width="26" height="20" viewBox="0 0 26 20"><path d="M2 7 H6 L12 2 V18 L6 13 H2Z" fill="none" stroke="#fff" stroke-width="1.1" stroke-linejoin="round"/><path d="M15 7.5 C16.5 9 16.5 11 15 12.5 M18 5 C21 8 21 12 18 15 M21 2.5 C25.5 7 25.5 13 21 17.5" fill="none" stroke="#fff" stroke-width="1.1"/></svg>
<div class="t " style="left:1682.5px;top:1028.6px;font-size:17px;line-height:17px;color:#ffffff;transform:scaleX(0.9039);transform-origin:0 0">ENG</div>
<div class="t " style="left:1690.8px;top:1056.2px;font-size:17px;line-height:17px;color:#ffffff;transform:scaleX(0.9824);transform-origin:0 0">IN</div>
<div class="t " style="left:1762.0px;top:1028.6px;font-size:17px;line-height:17px;color:#ffffff;transform:scaleX(1.0271);transform-origin:0 0">11:00</div>
<div class="t " style="left:1736.7px;top:1056.2px;font-size:17px;line-height:17px;color:#ffffff;transform:scaleX(1.0534);transform-origin:0 0">28-06-2021</div>
<svg class="a" style="left:1857px;top:1038px;" width="26" height="25" viewBox="0 0 26 25"><path d="M1.5 1.5 H24 V17.5 H17 L12.7 22 L8.5 17.5 H1.5Z" fill="none" stroke="#fff" stroke-width="1.2" stroke-linejoin="round"/></svg>
<div class="a" style="left:1912.5px;top:1020px;width:1.5px;height:60px;background:#55505a"></div>
<div class="a" style="left:0px;top:0px;width:2px;height:1019px;background:#000"></div>
<div class="a" style="left:1919px;top:0px;width:1px;height:1019px;background:#050505"></div></body></html>
